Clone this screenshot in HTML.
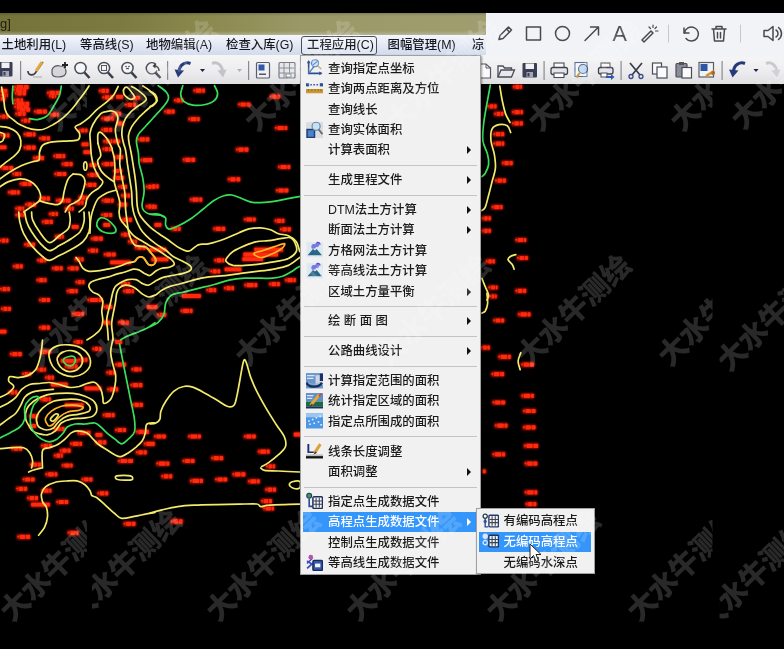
<!DOCTYPE html>
<html><head><meta charset="utf-8">
<style>
html,body{margin:0;padding:0;background:#000;}
body{width:784px;height:649px;position:relative;overflow:hidden;filter:blur(0.6px);font-family:"Liberation Sans","Noto Sans CJK SC",sans-serif;font-size:12px;color:#1a1a1a;}
.abs{position:absolute;}
#title{left:0;top:13px;width:487px;height:22px;background:linear-gradient(90deg,#75733a 0%,#7c7a40 25%,#8b894e 42%,#9a9866 62%,#a09e70 100%);}
#title:after{content:"";position:absolute;left:0;right:0;top:0;height:22px;background:linear-gradient(180deg,rgba(0,0,0,.18) 0,rgba(0,0,0,0) 3px,rgba(0,0,0,0) 18px,rgba(200,205,190,.55) 22px);}
#title span{position:absolute;left:0px;top:3px;font-size:13px;color:#1c1c10;}
#menubar{left:0;top:35px;width:487px;height:20px;background:linear-gradient(180deg,#f4f6fb 0%,#e4eaf5 45%,#d2dbec 100%);}
#menubar span{position:absolute;top:1px;line-height:18px;font-size:12.4px;color:#16161f;white-space:nowrap;font-weight:500;}
#menubar .act{left:301px;top:1px;width:74px;height:17px;border:1px solid #4a4f5c;border-radius:3px;position:absolute;background:rgba(255,255,255,.25);}
#tb1{left:0;top:55px;width:301px;height:29px;background:linear-gradient(180deg,#f6f6f7 0,#ececee 60%,#dfdfe2 100%);}
#tb2{left:481px;top:55px;width:303px;height:29px;background:linear-gradient(180deg,#f6f6f7 0,#ececee 60%,#dfdfe2 100%);}
.vs{position:absolute;top:6px;width:1px;height:18px;background:#8e8e92;}
#anno{left:486px;top:13px;width:298px;height:44px;background:#f2f3f7;}
#anno svg{position:absolute;left:0;top:0;}
#menu{left:300px;top:55px;width:181px;height:520px;background:#f1f1f1;border:1px solid #a0a0a0;box-sizing:border-box;box-shadow:1px 1px 2px rgba(0,0,0,.4);}
.mi{position:absolute;left:2px;right:2px;height:20px;line-height:20px;white-space:nowrap;font-size:12px;color:#1a1a1a;font-weight:500;}
.mi span{position:absolute;left:25px;top:0;font-size:12.4px;}
.mi .ic{position:absolute;left:3px;top:0.5px;width:17px;height:17px;}
.mi.hl{background:#3496fb;color:#fff;}
.mi.hl .arr{border-left-color:#fff;}
.sep{position:absolute;left:3px;right:3px;height:1px;background:#c4c4c4;}
.arr{position:absolute;right:7px;top:6px;width:0;height:0;border-left:4px solid #111;border-top:4px solid transparent;border-bottom:4px solid transparent;}
#sub{left:476px;top:508px;width:119px;height:66px;background:#f1f1f1;border:1px solid #a0a0a0;box-sizing:border-box;box-shadow:1px 1px 2px rgba(0,0,0,.4);}
#sub .mi span{left:24.5px;}
#wm text{font-family:"Liberation Sans","Noto Sans CJK SC",sans-serif;font-weight:900;font-size:29px;text-anchor:middle;dominant-baseline:central;}
</style></head><body>
<svg id="cad" class="abs" style="left:0;top:84px" width="784" height="565" viewBox="0 84 784 565">
<defs><filter id="gl" x="-30%" y="-80%" width="160%" height="260%"><feGaussianBlur stdDeviation="0.8"/></filter><filter id="g2" x="-20%" y="-50%" width="140%" height="200%"><feGaussianBlur stdDeviation="0.55"/></filter><filter id="lb"><feGaussianBlur stdDeviation="0.45"/></filter></defs>
<g fill="#c81200" filter="url(#gl)">
<rect x="192.9" y="88.0" width="12.5" height="5.2" rx="1"/>
<rect x="173.5" y="97.8" width="10.4" height="5.2" rx="1"/>
<rect x="163.7" y="109.1" width="11.5" height="5.2" rx="1"/>
<rect x="187.8" y="116.6" width="12.5" height="5.2" rx="1"/>
<rect x="237.5" y="101.9" width="13.5" height="5.2" rx="1"/>
<rect x="269.2" y="94.1" width="11.5" height="5.2" rx="1"/>
<rect x="274.4" y="125.4" width="13.5" height="5.2" rx="1"/>
<rect x="235.4" y="147.0" width="13.5" height="5.2" rx="1"/>
<rect x="182.2" y="157.2" width="13.5" height="5.2" rx="1"/>
<rect x="277.4" y="164.4" width="13.5" height="5.2" rx="1"/>
<rect x="227.2" y="176.7" width="13.5" height="5.2" rx="1"/>
<rect x="275.4" y="187.9" width="13.5" height="5.2" rx="1"/>
<rect x="189.3" y="197.1" width="13.5" height="5.2" rx="1"/>
<rect x="148.9" y="183.8" width="10.4" height="5.2" rx="1"/>
<rect x="148.9" y="204.3" width="8.4" height="5.2" rx="1"/>
<rect x="147.9" y="157.2" width="4.3" height="5.2" rx="1"/>
<rect x="-1.1" y="238.1" width="10.1" height="5.2" rx="1"/>
<rect x="41.4" y="219.3" width="12.1" height="5.2" rx="1"/>
<rect x="54.3" y="234.1" width="10.1" height="5.2" rx="1"/>
<rect x="23.6" y="242.0" width="12.1" height="5.2" rx="1"/>
<rect x="12.3" y="263.8" width="11.1" height="5.2" rx="1"/>
<rect x="36.5" y="257.8" width="10.1" height="5.2" rx="1"/>
<rect x="51.3" y="265.7" width="12.1" height="5.2" rx="1"/>
<rect x="67.1" y="265.7" width="12.1" height="5.2" rx="1"/>
<rect x="36.0" y="277.6" width="11.1" height="5.2" rx="1"/>
<rect x="-0.6" y="286.5" width="11.1" height="5.2" rx="1"/>
<rect x="75.0" y="279.6" width="10.1" height="5.2" rx="1"/>
<rect x="66.1" y="288.5" width="12.1" height="5.2" rx="1"/>
<rect x="38.5" y="297.4" width="12.1" height="5.2" rx="1"/>
<rect x="0.4" y="306.3" width="11.1" height="5.2" rx="1"/>
<rect x="71.6" y="311.2" width="13.1" height="5.2" rx="1"/>
<rect x="38.5" y="325.1" width="12.1" height="5.2" rx="1"/>
<rect x="-1.1" y="329.0" width="8.1" height="5.2" rx="1"/>
<rect x="86.9" y="297.4" width="16.0" height="5.2" rx="1"/>
<rect x="102.7" y="304.3" width="10.1" height="5.2" rx="1"/>
<rect x="90.3" y="236.1" width="13.1" height="5.2" rx="1"/>
<rect x="87.4" y="248.0" width="11.1" height="5.2" rx="1"/>
<rect x="103.2" y="251.9" width="13.1" height="5.2" rx="1"/>
<rect x="109.6" y="259.8" width="21.9" height="5.2" rx="1"/>
<rect x="102.7" y="222.3" width="8.1" height="5.2" rx="1"/>
<rect x="120.5" y="217.3" width="12.1" height="5.2" rx="1"/>
<rect x="120.5" y="232.1" width="10.1" height="5.2" rx="1"/>
<rect x="127.4" y="239.1" width="10.1" height="5.2" rx="1"/>
<rect x="134.3" y="245.0" width="12.1" height="5.2" rx="1"/>
<rect x="120.5" y="281.6" width="10.1" height="5.2" rx="1"/>
<rect x="122.5" y="288.5" width="12.1" height="5.2" rx="1"/>
<rect x="117.5" y="320.1" width="12.1" height="5.2" rx="1"/>
<rect x="146.2" y="304.3" width="8.1" height="5.2" rx="1"/>
<rect x="102.7" y="320.1" width="8.1" height="5.2" rx="1"/>
<rect x="74.0" y="256.8" width="10.1" height="5.2" rx="1"/>
<rect x="71.1" y="224.2" width="8.1" height="5.2" rx="1"/>
<rect x="14.7" y="212.4" width="10.1" height="5.2" rx="1"/>
<rect x="48.3" y="211.4" width="10.1" height="5.2" rx="1"/>
<rect x="100.7" y="212.4" width="12.1" height="5.2" rx="1"/>
<rect x="243.3" y="216.9" width="13.1" height="5.2" rx="1"/>
<rect x="212.7" y="226.2" width="13.1" height="5.2" rx="1"/>
<rect x="170.2" y="226.2" width="11.1" height="5.2" rx="1"/>
<rect x="153.9" y="222.3" width="8.1" height="5.2" rx="1"/>
<rect x="274.0" y="218.3" width="11.1" height="5.2" rx="1"/>
<rect x="279.4" y="226.8" width="12.1" height="5.2" rx="1"/>
<rect x="213.7" y="257.8" width="11.1" height="5.2" rx="1"/>
<rect x="209.7" y="268.7" width="11.1" height="5.2" rx="1"/>
<rect x="224.0" y="266.7" width="18.0" height="5.2" rx="1"/>
<rect x="284.3" y="277.6" width="12.1" height="5.2" rx="1"/>
<rect x="223.5" y="285.5" width="11.1" height="5.2" rx="1"/>
<rect x="205.8" y="287.5" width="11.1" height="5.2" rx="1"/>
<rect x="243.8" y="282.6" width="14.0" height="5.2" rx="1"/>
<rect x="268.5" y="281.6" width="12.1" height="5.2" rx="1"/>
<rect x="181.5" y="293.4" width="20.0" height="5.2" rx="1"/>
<rect x="180.0" y="308.3" width="13.1" height="5.2" rx="1"/>
<rect x="149.9" y="304.3" width="8.1" height="5.2" rx="1"/>
<rect x="156.8" y="312.2" width="10.1" height="5.2" rx="1"/>
<rect x="148.9" y="247.0" width="18.0" height="5.2" rx="1"/>
<rect x="150.9" y="256.8" width="18.0" height="5.2" rx="1"/>
<rect x="153.4" y="433.9" width="13.1" height="5.2" rx="1"/>
<rect x="187.5" y="433.9" width="14.0" height="5.2" rx="1"/>
<rect x="243.3" y="433.9" width="13.1" height="5.2" rx="1"/>
<rect x="293.2" y="431.9" width="8.1" height="5.2" rx="1"/>
<rect x="257.2" y="449.1" width="13.1" height="5.2" rx="1"/>
<rect x="210.7" y="455.6" width="13.1" height="5.2" rx="1"/>
<rect x="182.0" y="458.4" width="13.1" height="5.2" rx="1"/>
<rect x="155.8" y="461.0" width="14.0" height="5.2" rx="1"/>
<rect x="148.9" y="441.2" width="6.1" height="5.2" rx="1"/>
<rect x="22.1" y="476.9" width="13.1" height="5.2" rx="1"/>
<rect x="44.9" y="471.7" width="13.1" height="5.2" rx="1"/>
<rect x="81.0" y="476.9" width="12.1" height="5.2" rx="1"/>
<rect x="15.7" y="486.2" width="12.1" height="5.2" rx="1"/>
<rect x="40.9" y="488.1" width="11.1" height="5.2" rx="1"/>
<rect x="96.8" y="490.7" width="12.1" height="5.2" rx="1"/>
<rect x="26.6" y="495.5" width="12.1" height="5.2" rx="1"/>
<rect x="30.5" y="502.0" width="20.0" height="5.2" rx="1"/>
<rect x="55.8" y="499.4" width="13.1" height="5.2" rx="1"/>
<rect x="123.0" y="521.2" width="13.1" height="5.2" rx="1"/>
<rect x="67.1" y="530.2" width="12.1" height="5.2" rx="1"/>
<rect x="16.7" y="534.2" width="14.0" height="5.2" rx="1"/>
<rect x="160.8" y="473.7" width="12.1" height="5.2" rx="1"/>
<rect x="189.4" y="478.3" width="14.0" height="5.2" rx="1"/>
<rect x="214.6" y="476.9" width="13.1" height="5.2" rx="1"/>
<rect x="231.9" y="471.7" width="14.0" height="5.2" rx="1"/>
<rect x="247.3" y="478.8" width="13.1" height="5.2" rx="1"/>
<rect x="264.6" y="487.1" width="12.1" height="5.2" rx="1"/>
<rect x="260.6" y="498.6" width="12.1" height="5.2" rx="1"/>
<rect x="262.6" y="505.9" width="12.1" height="5.2" rx="1"/>
<rect x="170.2" y="518.8" width="13.1" height="5.2" rx="1"/>
<rect x="265.6" y="463.8" width="10.1" height="5.2" rx="1"/>
<rect x="512.3" y="84.2" width="10.4" height="5.2" rx="1"/>
<rect x="486.8" y="103.8" width="10.4" height="5.2" rx="1"/>
<rect x="493.6" y="111.3" width="10.4" height="5.2" rx="1"/>
<rect x="511.4" y="109.6" width="12.1" height="5.2" rx="1"/>
<rect x="511.4" y="120.8" width="12.1" height="5.2" rx="1"/>
<rect x="492.8" y="131.6" width="12.1" height="5.2" rx="1"/>
<rect x="492.8" y="141.1" width="12.1" height="5.2" rx="1"/>
<rect x="501.3" y="160.5" width="12.1" height="5.2" rx="1"/>
<rect x="494.5" y="178.1" width="12.1" height="5.2" rx="1"/>
<rect x="491.1" y="204.5" width="12.1" height="5.2" rx="1"/>
<rect x="481.1" y="215.7" width="10.4" height="5.2" rx="1"/>
<rect x="481.1" y="228.2" width="10.4" height="5.2" rx="1"/>
<rect x="514.8" y="237.4" width="12.1" height="5.2" rx="1"/>
<rect x="516.5" y="255.4" width="12.1" height="5.2" rx="1"/>
<rect x="485.2" y="258.8" width="10.4" height="5.2" rx="1"/>
<rect x="487.9" y="284.9" width="10.4" height="5.2" rx="1"/>
<rect x="514.8" y="288.2" width="12.1" height="5.2" rx="1"/>
<rect x="488.7" y="293.7" width="8.7" height="5.2" rx="1"/>
<rect x="517.4" y="311.8" width="13.8" height="5.2" rx="1"/>
<rect x="492.8" y="317.9" width="12.1" height="5.2" rx="1"/>
<rect x="480.1" y="345.0" width="10.4" height="5.2" rx="1"/>
<rect x="497.7" y="354.2" width="13.8" height="5.2" rx="1"/>
<rect x="520.7" y="362.0" width="13.8" height="5.2" rx="1"/>
<rect x="490.9" y="371.5" width="13.8" height="5.2" rx="1"/>
<rect x="520.7" y="393.2" width="13.8" height="5.2" rx="1"/>
<rect x="491.9" y="399.9" width="13.8" height="5.2" rx="1"/>
<rect x="522.4" y="408.4" width="13.8" height="5.2" rx="1"/>
<rect x="494.3" y="423.0" width="13.8" height="5.2" rx="1"/>
<rect x="522.4" y="424.7" width="13.8" height="5.2" rx="1"/>
<rect x="523.3" y="443.3" width="15.5" height="5.2" rx="1"/>
<rect x="491.9" y="451.8" width="13.8" height="5.2" rx="1"/>
<rect x="524.1" y="461.0" width="13.8" height="5.2" rx="1"/>
<rect x="482.1" y="468.8" width="4.3" height="5.2" rx="1"/>
<rect x="524.1" y="489.8" width="13.8" height="5.2" rx="1"/>
<rect x="525.0" y="501.6" width="12.1" height="5.2" rx="1"/>
<rect x="-0.1" y="88.3" width="8.1" height="5.2" rx="1"/>
<rect x="12.8" y="87.3" width="14.0" height="5.2" rx="1"/>
<rect x="46.4" y="90.3" width="14.0" height="5.2" rx="1"/>
<rect x="-0.1" y="96.2" width="6.1" height="5.2" rx="1"/>
<rect x="13.7" y="101.2" width="16.0" height="5.2" rx="1"/>
<rect x="16.7" y="107.1" width="14.0" height="5.2" rx="1"/>
<rect x="33.5" y="109.1" width="14.0" height="5.2" rx="1"/>
<rect x="49.3" y="112.0" width="10.1" height="5.2" rx="1"/>
<rect x="-1.1" y="114.0" width="10.1" height="5.2" rx="1"/>
<rect x="20.7" y="118.0" width="10.1" height="5.2" rx="1"/>
<rect x="23.1" y="131.8" width="13.1" height="5.2" rx="1"/>
<rect x="38.5" y="135.8" width="12.1" height="5.2" rx="1"/>
<rect x="-0.1" y="132.8" width="10.1" height="5.2" rx="1"/>
<rect x="-1.1" y="144.7" width="8.1" height="5.2" rx="1"/>
<rect x="23.1" y="145.1" width="13.1" height="5.2" rx="1"/>
<rect x="32.5" y="155.5" width="12.1" height="5.2" rx="1"/>
<rect x="52.8" y="153.6" width="13.1" height="5.2" rx="1"/>
<rect x="61.2" y="161.5" width="12.1" height="5.2" rx="1"/>
<rect x="-0.1" y="165.4" width="14.0" height="5.2" rx="1"/>
<rect x="11.8" y="171.4" width="10.1" height="5.2" rx="1"/>
<rect x="53.8" y="171.4" width="13.1" height="5.2" rx="1"/>
<rect x="19.2" y="181.2" width="13.1" height="5.2" rx="1"/>
<rect x="7.3" y="189.7" width="13.1" height="5.2" rx="1"/>
<rect x="38.5" y="196.1" width="12.1" height="5.2" rx="1"/>
<rect x="24.6" y="202.0" width="12.1" height="5.2" rx="1"/>
<rect x="14.7" y="206.0" width="10.1" height="5.2" rx="1"/>
<rect x="78.0" y="127.9" width="10.1" height="5.2" rx="1"/>
<rect x="81.0" y="141.7" width="8.1" height="5.2" rx="1"/>
<rect x="82.9" y="149.6" width="8.1" height="5.2" rx="1"/>
<rect x="98.3" y="88.3" width="11.1" height="5.2" rx="1"/>
<rect x="101.7" y="94.8" width="12.1" height="5.2" rx="1"/>
<rect x="115.6" y="94.3" width="8.1" height="5.2" rx="1"/>
<rect x="124.5" y="102.2" width="12.1" height="5.2" rx="1"/>
<rect x="132.4" y="95.2" width="8.1" height="5.2" rx="1"/>
<rect x="100.7" y="116.0" width="14.0" height="5.2" rx="1"/>
<rect x="100.7" y="127.3" width="12.1" height="5.2" rx="1"/>
<rect x="136.8" y="136.8" width="13.1" height="5.2" rx="1"/>
<rect x="139.8" y="157.5" width="13.1" height="5.2" rx="1"/>
<rect x="145.2" y="184.2" width="10.1" height="5.2" rx="1"/>
<rect x="145.2" y="204.0" width="10.1" height="5.2" rx="1"/>
<rect x="102.7" y="138.7" width="10.1" height="5.2" rx="1"/>
<rect x="101.7" y="146.6" width="10.1" height="5.2" rx="1"/>
<rect x="101.2" y="161.5" width="13.1" height="5.2" rx="1"/>
<rect x="88.9" y="162.5" width="8.1" height="5.2" rx="1"/>
<rect x="112.6" y="168.4" width="10.1" height="5.2" rx="1"/>
<rect x="86.9" y="172.3" width="12.1" height="5.2" rx="1"/>
<rect x="112.6" y="175.3" width="12.1" height="5.2" rx="1"/>
<rect x="84.9" y="182.2" width="12.1" height="5.2" rx="1"/>
<rect x="117.5" y="184.2" width="10.1" height="5.2" rx="1"/>
<rect x="101.2" y="198.0" width="13.1" height="5.2" rx="1"/>
<rect x="120.5" y="193.1" width="10.1" height="5.2" rx="1"/>
<rect x="117.5" y="202.0" width="10.1" height="5.2" rx="1"/>
<rect x="78.0" y="195.1" width="10.1" height="5.2" rx="1"/>
<rect x="55.3" y="198.0" width="16.0" height="5.2" rx="1"/>
<rect x="74.0" y="200.0" width="10.1" height="5.2" rx="1"/>
<rect x="64.2" y="206.0" width="10.1" height="5.2" rx="1"/>
<rect x="111.6" y="111.1" width="10.1" height="5.2" rx="1"/>
<rect x="116.5" y="120.9" width="8.1" height="5.2" rx="1"/>
<rect x="112.6" y="138.7" width="8.1" height="5.2" rx="1"/>
<rect x="113.6" y="154.6" width="10.1" height="5.2" rx="1"/>
<rect x="9.3" y="351.6" width="13.1" height="5.2" rx="1"/>
<rect x="73.1" y="339.4" width="10.1" height="5.2" rx="1"/>
<rect x="91.8" y="346.3" width="10.1" height="5.2" rx="1"/>
<rect x="114.6" y="362.1" width="12.1" height="5.2" rx="1"/>
<rect x="130.9" y="366.7" width="11.1" height="5.2" rx="1"/>
<rect x="129.9" y="382.5" width="13.1" height="5.2" rx="1"/>
<rect x="131.4" y="402.2" width="12.1" height="5.2" rx="1"/>
<rect x="102.2" y="412.5" width="13.1" height="5.2" rx="1"/>
<rect x="21.6" y="371.4" width="10.1" height="5.2" rx="1"/>
<rect x="7.8" y="389.8" width="10.1" height="5.2" rx="1"/>
<rect x="39.4" y="396.7" width="12.1" height="5.2" rx="1"/>
<rect x="50.3" y="381.9" width="18.0" height="5.2" rx="1"/>
<rect x="83.9" y="385.8" width="18.0" height="5.2" rx="1"/>
<rect x="106.7" y="386.8" width="12.1" height="5.2" rx="1"/>
<rect x="64.2" y="402.6" width="20.0" height="5.2" rx="1"/>
<rect x="28.6" y="413.5" width="10.1" height="5.2" rx="1"/>
<rect x="28.6" y="423.4" width="8.1" height="5.2" rx="1"/>
<rect x="53.3" y="426.4" width="12.1" height="5.2" rx="1"/>
<rect x="77.0" y="430.3" width="14.0" height="5.2" rx="1"/>
<rect x="94.8" y="432.3" width="8.1" height="5.2" rx="1"/>
<rect x="114.6" y="427.4" width="12.1" height="5.2" rx="1"/>
<rect x="135.3" y="429.3" width="14.0" height="5.2" rx="1"/>
<rect x="69.6" y="441.2" width="13.1" height="5.2" rx="1"/>
<rect x="40.4" y="443.2" width="12.1" height="5.2" rx="1"/>
<rect x="94.8" y="439.8" width="12.1" height="5.2" rx="1"/>
<rect x="143.2" y="441.2" width="12.1" height="5.2" rx="1"/>
<rect x="10.8" y="446.1" width="12.1" height="5.2" rx="1"/>
<rect x="59.2" y="448.1" width="12.1" height="5.2" rx="1"/>
<rect x="53.3" y="453.1" width="10.1" height="5.2" rx="1"/>
<rect x="135.3" y="449.7" width="12.1" height="5.2" rx="1"/>
<rect x="29.6" y="462.0" width="12.1" height="5.2" rx="1"/>
<rect x="61.2" y="462.9" width="12.1" height="5.2" rx="1"/>
<rect x="117.5" y="458.4" width="16.0" height="5.2" rx="1"/>
<rect x="39.4" y="349.3" width="12.1" height="5.2" rx="1"/>
<rect x="36.5" y="367.1" width="10.1" height="5.2" rx="1"/>
<rect x="44.4" y="375.0" width="10.1" height="5.2" rx="1"/>
<rect x="60.2" y="358.2" width="18.0" height="5.2" rx="1"/>
<rect x="64.2" y="364.1" width="14.0" height="5.2" rx="1"/>
<rect x="78.0" y="357.2" width="10.1" height="5.2" rx="1"/>
<rect x="105.7" y="370.0" width="10.1" height="5.2" rx="1"/>
<rect x="114.6" y="339.4" width="8.1" height="5.2" rx="1"/>
<rect x="13.7" y="84.5" width="15.5" height="5.2" rx="1"/>
<rect x="14.2" y="90.8" width="12.4" height="5.2" rx="1"/>
<rect x="-0.1" y="92.6" width="8.4" height="5.2" rx="1"/>
<rect x="13.7" y="104.4" width="15.5" height="5.2" rx="1"/>
<rect x="14.7" y="111.2" width="11.4" height="5.2" rx="1"/>
<rect x="48.4" y="93.6" width="8.4" height="5.2" rx="1"/>
<rect x="13.2" y="97.7" width="10.4" height="5.2" rx="1"/>
<rect x="242.8" y="251.9" width="35.8" height="5.2" rx="1"/>
<rect x="253.7" y="247.0" width="29.9" height="5.2" rx="1"/>
<rect x="241.8" y="256.5" width="21.9" height="5.2" rx="1"/>
</g>
<g fill="#ff2a10" filter="url(#g2)">
<rect x="193.5" y="89.6" width="1.6" height="1.6"/>
<rect x="196.1" y="88.5" width="5.3" height="4.2" rx="0.8"/>
<rect x="202.4" y="88.5" width="2.5" height="4.2" rx="0.8"/>
<rect x="174.1" y="99.4" width="1.6" height="1.6"/>
<rect x="176.7" y="98.3" width="3.3" height="4.2" rx="0.8"/>
<rect x="180.9" y="98.3" width="2.4" height="4.2" rx="0.8"/>
<rect x="164.3" y="110.7" width="1.6" height="1.6"/>
<rect x="166.9" y="109.6" width="3.9" height="4.2" rx="0.8"/>
<rect x="171.7" y="109.6" width="2.9" height="4.2" rx="0.8"/>
<rect x="188.4" y="118.2" width="1.6" height="1.6"/>
<rect x="191.0" y="117.1" width="5.3" height="4.2" rx="0.8"/>
<rect x="197.2" y="117.1" width="2.5" height="4.2" rx="0.8"/>
<rect x="238.1" y="103.5" width="1.6" height="1.6"/>
<rect x="240.7" y="102.4" width="5.0" height="4.2" rx="0.8"/>
<rect x="246.6" y="102.4" width="3.8" height="4.2" rx="0.8"/>
<rect x="269.8" y="95.7" width="1.6" height="1.6"/>
<rect x="272.4" y="94.6" width="3.9" height="4.2" rx="0.8"/>
<rect x="277.2" y="94.6" width="2.9" height="4.2" rx="0.8"/>
<rect x="275.0" y="127.0" width="1.6" height="1.6"/>
<rect x="277.6" y="125.9" width="6.0" height="4.2" rx="0.8"/>
<rect x="284.5" y="125.9" width="2.8" height="4.2" rx="0.8"/>
<rect x="236.0" y="148.6" width="1.6" height="1.6"/>
<rect x="238.6" y="147.5" width="5.0" height="4.2" rx="0.8"/>
<rect x="244.6" y="147.5" width="3.8" height="4.2" rx="0.8"/>
<rect x="182.8" y="158.8" width="1.6" height="1.6"/>
<rect x="185.4" y="157.7" width="5.0" height="4.2" rx="0.8"/>
<rect x="191.3" y="157.7" width="3.8" height="4.2" rx="0.8"/>
<rect x="278.0" y="166.0" width="1.6" height="1.6"/>
<rect x="280.6" y="164.9" width="6.0" height="4.2" rx="0.8"/>
<rect x="287.5" y="164.9" width="2.8" height="4.2" rx="0.8"/>
<rect x="227.8" y="178.3" width="1.6" height="1.6"/>
<rect x="230.4" y="177.2" width="5.0" height="4.2" rx="0.8"/>
<rect x="236.4" y="177.2" width="3.8" height="4.2" rx="0.8"/>
<rect x="276.0" y="189.5" width="1.6" height="1.6"/>
<rect x="278.6" y="188.4" width="5.0" height="4.2" rx="0.8"/>
<rect x="284.5" y="188.4" width="3.8" height="4.2" rx="0.8"/>
<rect x="189.9" y="198.7" width="1.6" height="1.6"/>
<rect x="192.5" y="197.6" width="6.0" height="4.2" rx="0.8"/>
<rect x="199.4" y="197.6" width="2.8" height="4.2" rx="0.8"/>
<rect x="149.5" y="185.4" width="1.6" height="1.6"/>
<rect x="152.1" y="184.3" width="3.3" height="4.2" rx="0.8"/>
<rect x="156.3" y="184.3" width="2.4" height="4.2" rx="0.8"/>
<rect x="149.5" y="205.9" width="1.6" height="1.6"/>
<rect x="152.1" y="204.8" width="2.2" height="4.2" rx="0.8"/>
<rect x="155.1" y="204.8" width="1.5" height="4.2" rx="0.8"/>
<rect x="148.5" y="157.9" width="3.1" height="3.8" rx="1"/>
<rect x="-0.5" y="239.7" width="1.6" height="1.6"/>
<rect x="2.1" y="238.6" width="3.1" height="4.2" rx="0.8"/>
<rect x="6.1" y="238.6" width="2.3" height="4.2" rx="0.8"/>
<rect x="42.0" y="220.9" width="1.6" height="1.6"/>
<rect x="44.6" y="219.8" width="4.2" height="4.2" rx="0.8"/>
<rect x="49.7" y="219.8" width="3.1" height="4.2" rx="0.8"/>
<rect x="54.9" y="235.7" width="1.6" height="1.6"/>
<rect x="57.5" y="234.6" width="3.7" height="4.2" rx="0.8"/>
<rect x="62.1" y="234.6" width="1.6" height="4.2" rx="0.8"/>
<rect x="24.2" y="243.6" width="1.6" height="1.6"/>
<rect x="26.8" y="242.5" width="4.2" height="4.2" rx="0.8"/>
<rect x="32.0" y="242.5" width="3.1" height="4.2" rx="0.8"/>
<rect x="12.9" y="265.4" width="1.6" height="1.6"/>
<rect x="15.5" y="264.3" width="3.7" height="4.2" rx="0.8"/>
<rect x="20.0" y="264.3" width="2.7" height="4.2" rx="0.8"/>
<rect x="37.1" y="259.4" width="1.6" height="1.6"/>
<rect x="39.7" y="258.3" width="3.7" height="4.2" rx="0.8"/>
<rect x="44.3" y="258.3" width="1.6" height="4.2" rx="0.8"/>
<rect x="51.9" y="267.3" width="1.6" height="1.6"/>
<rect x="54.5" y="266.2" width="4.2" height="4.2" rx="0.8"/>
<rect x="59.6" y="266.2" width="3.1" height="4.2" rx="0.8"/>
<rect x="67.7" y="267.3" width="1.6" height="1.6"/>
<rect x="70.3" y="266.2" width="4.2" height="4.2" rx="0.8"/>
<rect x="75.4" y="266.2" width="3.1" height="4.2" rx="0.8"/>
<rect x="36.6" y="279.2" width="1.6" height="1.6"/>
<rect x="39.2" y="278.1" width="4.4" height="4.2" rx="0.8"/>
<rect x="44.5" y="278.1" width="2.0" height="4.2" rx="0.8"/>
<rect x="0.0" y="288.1" width="1.6" height="1.6"/>
<rect x="2.6" y="287.0" width="3.7" height="4.2" rx="0.8"/>
<rect x="7.2" y="287.0" width="2.7" height="4.2" rx="0.8"/>
<rect x="75.6" y="281.2" width="1.6" height="1.6"/>
<rect x="78.2" y="280.1" width="3.1" height="4.2" rx="0.8"/>
<rect x="82.2" y="280.1" width="2.3" height="4.2" rx="0.8"/>
<rect x="66.7" y="290.1" width="1.6" height="1.6"/>
<rect x="69.3" y="289.0" width="5.1" height="4.2" rx="0.8"/>
<rect x="75.3" y="289.0" width="2.3" height="4.2" rx="0.8"/>
<rect x="39.1" y="299.0" width="1.6" height="1.6"/>
<rect x="41.7" y="297.9" width="4.2" height="4.2" rx="0.8"/>
<rect x="46.8" y="297.9" width="3.1" height="4.2" rx="0.8"/>
<rect x="1.0" y="307.9" width="1.6" height="1.6"/>
<rect x="3.6" y="306.8" width="3.7" height="4.2" rx="0.8"/>
<rect x="8.2" y="306.8" width="2.7" height="4.2" rx="0.8"/>
<rect x="72.2" y="312.8" width="1.6" height="1.6"/>
<rect x="74.8" y="311.7" width="5.7" height="4.2" rx="0.8"/>
<rect x="81.4" y="311.7" width="2.6" height="4.2" rx="0.8"/>
<rect x="39.1" y="326.7" width="1.6" height="1.6"/>
<rect x="41.7" y="325.6" width="4.2" height="4.2" rx="0.8"/>
<rect x="46.8" y="325.6" width="3.1" height="4.2" rx="0.8"/>
<rect x="-0.5" y="329.7" width="6.9" height="3.8" rx="1"/>
<rect x="87.5" y="299.0" width="1.6" height="1.6"/>
<rect x="90.1" y="297.9" width="7.7" height="4.2" rx="0.8"/>
<rect x="98.7" y="297.9" width="3.7" height="4.2" rx="0.8"/>
<rect x="103.3" y="305.9" width="1.6" height="1.6"/>
<rect x="105.9" y="304.8" width="3.1" height="4.2" rx="0.8"/>
<rect x="109.9" y="304.8" width="2.3" height="4.2" rx="0.8"/>
<rect x="90.9" y="237.7" width="1.6" height="1.6"/>
<rect x="93.5" y="236.6" width="4.8" height="4.2" rx="0.8"/>
<rect x="99.2" y="236.6" width="3.6" height="4.2" rx="0.8"/>
<rect x="88.0" y="249.6" width="1.6" height="1.6"/>
<rect x="90.6" y="248.5" width="4.4" height="4.2" rx="0.8"/>
<rect x="95.9" y="248.5" width="2.0" height="4.2" rx="0.8"/>
<rect x="103.8" y="253.5" width="1.6" height="1.6"/>
<rect x="106.4" y="252.4" width="4.8" height="4.2" rx="0.8"/>
<rect x="112.1" y="252.4" width="3.6" height="4.2" rx="0.8"/>
<rect x="110.2" y="260.5" width="20.7" height="3.8" rx="1"/>
<rect x="103.3" y="223.0" width="6.9" height="3.8" rx="1"/>
<rect x="121.1" y="218.9" width="1.6" height="1.6"/>
<rect x="123.7" y="217.8" width="4.2" height="4.2" rx="0.8"/>
<rect x="128.8" y="217.8" width="3.1" height="4.2" rx="0.8"/>
<rect x="121.1" y="233.7" width="1.6" height="1.6"/>
<rect x="123.7" y="232.6" width="3.1" height="4.2" rx="0.8"/>
<rect x="127.7" y="232.6" width="2.3" height="4.2" rx="0.8"/>
<rect x="128.0" y="240.7" width="1.6" height="1.6"/>
<rect x="130.6" y="239.6" width="3.7" height="4.2" rx="0.8"/>
<rect x="135.3" y="239.6" width="1.6" height="4.2" rx="0.8"/>
<rect x="134.9" y="246.6" width="1.6" height="1.6"/>
<rect x="137.5" y="245.5" width="4.2" height="4.2" rx="0.8"/>
<rect x="142.7" y="245.5" width="3.1" height="4.2" rx="0.8"/>
<rect x="121.1" y="283.2" width="1.6" height="1.6"/>
<rect x="123.7" y="282.1" width="3.1" height="4.2" rx="0.8"/>
<rect x="127.7" y="282.1" width="2.3" height="4.2" rx="0.8"/>
<rect x="123.1" y="290.1" width="1.6" height="1.6"/>
<rect x="125.7" y="289.0" width="5.1" height="4.2" rx="0.8"/>
<rect x="131.6" y="289.0" width="2.3" height="4.2" rx="0.8"/>
<rect x="118.1" y="321.7" width="1.6" height="1.6"/>
<rect x="120.7" y="320.6" width="4.2" height="4.2" rx="0.8"/>
<rect x="125.9" y="320.6" width="3.1" height="4.2" rx="0.8"/>
<rect x="146.8" y="305.0" width="6.9" height="3.8" rx="1"/>
<rect x="103.3" y="320.8" width="6.9" height="3.8" rx="1"/>
<rect x="74.6" y="258.4" width="1.6" height="1.6"/>
<rect x="77.2" y="257.3" width="3.1" height="4.2" rx="0.8"/>
<rect x="81.3" y="257.3" width="2.3" height="4.2" rx="0.8"/>
<rect x="71.7" y="224.9" width="6.9" height="3.8" rx="1"/>
<rect x="15.3" y="214.0" width="1.6" height="1.6"/>
<rect x="17.9" y="212.9" width="3.7" height="4.2" rx="0.8"/>
<rect x="22.6" y="212.9" width="1.6" height="4.2" rx="0.8"/>
<rect x="48.9" y="213.0" width="1.6" height="1.6"/>
<rect x="51.5" y="211.9" width="3.1" height="4.2" rx="0.8"/>
<rect x="55.6" y="211.9" width="2.3" height="4.2" rx="0.8"/>
<rect x="101.3" y="214.0" width="1.6" height="1.6"/>
<rect x="103.9" y="212.9" width="4.2" height="4.2" rx="0.8"/>
<rect x="109.1" y="212.9" width="3.1" height="4.2" rx="0.8"/>
<rect x="243.9" y="218.5" width="1.6" height="1.6"/>
<rect x="246.5" y="217.4" width="5.7" height="4.2" rx="0.8"/>
<rect x="253.1" y="217.4" width="2.6" height="4.2" rx="0.8"/>
<rect x="213.3" y="227.8" width="1.6" height="1.6"/>
<rect x="215.9" y="226.7" width="4.8" height="4.2" rx="0.8"/>
<rect x="221.6" y="226.7" width="3.6" height="4.2" rx="0.8"/>
<rect x="170.8" y="227.8" width="1.6" height="1.6"/>
<rect x="173.4" y="226.7" width="3.7" height="4.2" rx="0.8"/>
<rect x="177.9" y="226.7" width="2.7" height="4.2" rx="0.8"/>
<rect x="154.5" y="223.0" width="6.9" height="3.8" rx="1"/>
<rect x="274.6" y="219.9" width="1.6" height="1.6"/>
<rect x="277.2" y="218.8" width="3.7" height="4.2" rx="0.8"/>
<rect x="281.7" y="218.8" width="2.7" height="4.2" rx="0.8"/>
<rect x="280.0" y="228.4" width="1.6" height="1.6"/>
<rect x="282.6" y="227.3" width="4.2" height="4.2" rx="0.8"/>
<rect x="287.7" y="227.3" width="3.1" height="4.2" rx="0.8"/>
<rect x="214.3" y="259.4" width="1.6" height="1.6"/>
<rect x="216.9" y="258.3" width="4.4" height="4.2" rx="0.8"/>
<rect x="222.2" y="258.3" width="2.0" height="4.2" rx="0.8"/>
<rect x="210.3" y="270.3" width="1.6" height="1.6"/>
<rect x="212.9" y="269.2" width="3.7" height="4.2" rx="0.8"/>
<rect x="217.5" y="269.2" width="2.7" height="4.2" rx="0.8"/>
<rect x="224.6" y="267.4" width="16.8" height="3.8" rx="1"/>
<rect x="284.9" y="279.2" width="1.6" height="1.6"/>
<rect x="287.5" y="278.1" width="5.1" height="4.2" rx="0.8"/>
<rect x="293.5" y="278.1" width="2.3" height="4.2" rx="0.8"/>
<rect x="224.1" y="287.1" width="1.6" height="1.6"/>
<rect x="226.7" y="286.0" width="3.7" height="4.2" rx="0.8"/>
<rect x="231.3" y="286.0" width="2.7" height="4.2" rx="0.8"/>
<rect x="206.4" y="289.1" width="1.6" height="1.6"/>
<rect x="209.0" y="288.0" width="3.7" height="4.2" rx="0.8"/>
<rect x="213.5" y="288.0" width="2.7" height="4.2" rx="0.8"/>
<rect x="244.4" y="284.2" width="1.6" height="1.6"/>
<rect x="247.0" y="283.1" width="6.4" height="4.2" rx="0.8"/>
<rect x="254.3" y="283.1" width="3.0" height="4.2" rx="0.8"/>
<rect x="269.1" y="283.2" width="1.6" height="1.6"/>
<rect x="271.7" y="282.1" width="4.2" height="4.2" rx="0.8"/>
<rect x="276.8" y="282.1" width="3.1" height="4.2" rx="0.8"/>
<rect x="182.1" y="294.1" width="18.8" height="3.8" rx="1"/>
<rect x="180.6" y="309.9" width="1.6" height="1.6"/>
<rect x="183.2" y="308.8" width="5.7" height="4.2" rx="0.8"/>
<rect x="189.9" y="308.8" width="2.6" height="4.2" rx="0.8"/>
<rect x="150.5" y="305.0" width="6.9" height="3.8" rx="1"/>
<rect x="157.4" y="313.8" width="1.6" height="1.6"/>
<rect x="160.0" y="312.7" width="3.1" height="4.2" rx="0.8"/>
<rect x="164.0" y="312.7" width="2.3" height="4.2" rx="0.8"/>
<rect x="149.5" y="247.7" width="16.8" height="3.8" rx="1"/>
<rect x="151.5" y="257.5" width="16.8" height="3.8" rx="1"/>
<rect x="154.0" y="435.5" width="1.6" height="1.6"/>
<rect x="156.6" y="434.4" width="4.8" height="4.2" rx="0.8"/>
<rect x="162.2" y="434.4" width="3.6" height="4.2" rx="0.8"/>
<rect x="188.1" y="435.5" width="1.6" height="1.6"/>
<rect x="190.7" y="434.4" width="6.4" height="4.2" rx="0.8"/>
<rect x="197.9" y="434.4" width="3.0" height="4.2" rx="0.8"/>
<rect x="243.9" y="435.5" width="1.6" height="1.6"/>
<rect x="246.5" y="434.4" width="4.8" height="4.2" rx="0.8"/>
<rect x="252.2" y="434.4" width="3.6" height="4.2" rx="0.8"/>
<rect x="293.8" y="432.6" width="6.9" height="3.8" rx="1"/>
<rect x="257.8" y="450.7" width="1.6" height="1.6"/>
<rect x="260.4" y="449.6" width="5.7" height="4.2" rx="0.8"/>
<rect x="267.0" y="449.6" width="2.6" height="4.2" rx="0.8"/>
<rect x="211.3" y="457.2" width="1.6" height="1.6"/>
<rect x="213.9" y="456.1" width="4.8" height="4.2" rx="0.8"/>
<rect x="219.6" y="456.1" width="3.6" height="4.2" rx="0.8"/>
<rect x="182.6" y="460.0" width="1.6" height="1.6"/>
<rect x="185.2" y="458.9" width="4.8" height="4.2" rx="0.8"/>
<rect x="190.9" y="458.9" width="3.6" height="4.2" rx="0.8"/>
<rect x="156.4" y="462.6" width="1.6" height="1.6"/>
<rect x="159.0" y="461.5" width="6.4" height="4.2" rx="0.8"/>
<rect x="166.3" y="461.5" width="3.0" height="4.2" rx="0.8"/>
<rect x="149.5" y="441.9" width="4.9" height="3.8" rx="1"/>
<rect x="22.7" y="478.5" width="1.6" height="1.6"/>
<rect x="25.3" y="477.4" width="4.8" height="4.2" rx="0.8"/>
<rect x="31.0" y="477.4" width="3.6" height="4.2" rx="0.8"/>
<rect x="45.5" y="473.3" width="1.6" height="1.6"/>
<rect x="48.1" y="472.2" width="5.7" height="4.2" rx="0.8"/>
<rect x="54.7" y="472.2" width="2.6" height="4.2" rx="0.8"/>
<rect x="81.6" y="478.5" width="1.6" height="1.6"/>
<rect x="84.2" y="477.4" width="4.2" height="4.2" rx="0.8"/>
<rect x="89.3" y="477.4" width="3.1" height="4.2" rx="0.8"/>
<rect x="16.3" y="487.8" width="1.6" height="1.6"/>
<rect x="18.9" y="486.7" width="4.2" height="4.2" rx="0.8"/>
<rect x="24.0" y="486.7" width="3.1" height="4.2" rx="0.8"/>
<rect x="41.5" y="489.7" width="1.6" height="1.6"/>
<rect x="44.1" y="488.6" width="4.4" height="4.2" rx="0.8"/>
<rect x="49.4" y="488.6" width="2.0" height="4.2" rx="0.8"/>
<rect x="97.4" y="492.3" width="1.6" height="1.6"/>
<rect x="100.0" y="491.2" width="4.2" height="4.2" rx="0.8"/>
<rect x="105.1" y="491.2" width="3.1" height="4.2" rx="0.8"/>
<rect x="27.2" y="497.1" width="1.6" height="1.6"/>
<rect x="29.8" y="496.0" width="4.2" height="4.2" rx="0.8"/>
<rect x="34.9" y="496.0" width="3.1" height="4.2" rx="0.8"/>
<rect x="31.1" y="502.7" width="18.8" height="3.8" rx="1"/>
<rect x="56.4" y="501.0" width="1.6" height="1.6"/>
<rect x="59.0" y="499.9" width="4.8" height="4.2" rx="0.8"/>
<rect x="64.6" y="499.9" width="3.6" height="4.2" rx="0.8"/>
<rect x="123.6" y="522.8" width="1.6" height="1.6"/>
<rect x="126.2" y="521.7" width="4.8" height="4.2" rx="0.8"/>
<rect x="131.9" y="521.7" width="3.6" height="4.2" rx="0.8"/>
<rect x="67.7" y="531.8" width="1.6" height="1.6"/>
<rect x="70.3" y="530.7" width="5.1" height="4.2" rx="0.8"/>
<rect x="76.3" y="530.7" width="2.3" height="4.2" rx="0.8"/>
<rect x="17.3" y="535.8" width="1.6" height="1.6"/>
<rect x="19.9" y="534.7" width="5.3" height="4.2" rx="0.8"/>
<rect x="26.1" y="534.7" width="4.0" height="4.2" rx="0.8"/>
<rect x="161.4" y="475.3" width="1.6" height="1.6"/>
<rect x="164.0" y="474.2" width="4.2" height="4.2" rx="0.8"/>
<rect x="169.1" y="474.2" width="3.1" height="4.2" rx="0.8"/>
<rect x="190.0" y="479.9" width="1.6" height="1.6"/>
<rect x="192.6" y="478.8" width="6.4" height="4.2" rx="0.8"/>
<rect x="199.9" y="478.8" width="3.0" height="4.2" rx="0.8"/>
<rect x="215.2" y="478.5" width="1.6" height="1.6"/>
<rect x="217.8" y="477.4" width="4.8" height="4.2" rx="0.8"/>
<rect x="223.5" y="477.4" width="3.6" height="4.2" rx="0.8"/>
<rect x="232.5" y="473.3" width="1.6" height="1.6"/>
<rect x="235.1" y="472.2" width="5.3" height="4.2" rx="0.8"/>
<rect x="241.4" y="472.2" width="4.0" height="4.2" rx="0.8"/>
<rect x="247.9" y="480.4" width="1.6" height="1.6"/>
<rect x="250.5" y="479.3" width="5.7" height="4.2" rx="0.8"/>
<rect x="257.1" y="479.3" width="2.6" height="4.2" rx="0.8"/>
<rect x="265.2" y="488.7" width="1.6" height="1.6"/>
<rect x="267.8" y="487.6" width="4.2" height="4.2" rx="0.8"/>
<rect x="272.9" y="487.6" width="3.1" height="4.2" rx="0.8"/>
<rect x="261.2" y="500.2" width="1.6" height="1.6"/>
<rect x="263.8" y="499.1" width="4.2" height="4.2" rx="0.8"/>
<rect x="268.9" y="499.1" width="3.1" height="4.2" rx="0.8"/>
<rect x="263.2" y="507.5" width="1.6" height="1.6"/>
<rect x="265.8" y="506.4" width="5.1" height="4.2" rx="0.8"/>
<rect x="271.7" y="506.4" width="2.3" height="4.2" rx="0.8"/>
<rect x="170.8" y="520.4" width="1.6" height="1.6"/>
<rect x="173.4" y="519.3" width="4.8" height="4.2" rx="0.8"/>
<rect x="179.0" y="519.3" width="3.6" height="4.2" rx="0.8"/>
<rect x="266.2" y="465.4" width="1.6" height="1.6"/>
<rect x="268.8" y="464.3" width="3.1" height="4.2" rx="0.8"/>
<rect x="272.8" y="464.3" width="2.3" height="4.2" rx="0.8"/>
<rect x="512.9" y="85.8" width="1.6" height="1.6"/>
<rect x="515.5" y="84.7" width="3.9" height="4.2" rx="0.8"/>
<rect x="520.3" y="84.7" width="1.7" height="4.2" rx="0.8"/>
<rect x="487.4" y="105.4" width="1.6" height="1.6"/>
<rect x="490.0" y="104.3" width="3.3" height="4.2" rx="0.8"/>
<rect x="494.2" y="104.3" width="2.4" height="4.2" rx="0.8"/>
<rect x="494.2" y="112.9" width="1.6" height="1.6"/>
<rect x="496.8" y="111.8" width="3.3" height="4.2" rx="0.8"/>
<rect x="501.0" y="111.8" width="2.4" height="4.2" rx="0.8"/>
<rect x="512.0" y="111.2" width="1.6" height="1.6"/>
<rect x="514.6" y="110.1" width="5.1" height="4.2" rx="0.8"/>
<rect x="520.6" y="110.1" width="2.3" height="4.2" rx="0.8"/>
<rect x="512.0" y="122.4" width="1.6" height="1.6"/>
<rect x="514.6" y="121.3" width="4.2" height="4.2" rx="0.8"/>
<rect x="519.8" y="121.3" width="3.1" height="4.2" rx="0.8"/>
<rect x="493.4" y="133.2" width="1.6" height="1.6"/>
<rect x="496.0" y="132.1" width="4.2" height="4.2" rx="0.8"/>
<rect x="501.1" y="132.1" width="3.1" height="4.2" rx="0.8"/>
<rect x="493.4" y="142.7" width="1.6" height="1.6"/>
<rect x="496.0" y="141.6" width="5.1" height="4.2" rx="0.8"/>
<rect x="501.9" y="141.6" width="2.3" height="4.2" rx="0.8"/>
<rect x="501.9" y="162.1" width="1.6" height="1.6"/>
<rect x="504.5" y="161.0" width="4.2" height="4.2" rx="0.8"/>
<rect x="509.6" y="161.0" width="3.1" height="4.2" rx="0.8"/>
<rect x="495.1" y="179.7" width="1.6" height="1.6"/>
<rect x="497.7" y="178.6" width="4.2" height="4.2" rx="0.8"/>
<rect x="502.8" y="178.6" width="3.1" height="4.2" rx="0.8"/>
<rect x="491.7" y="206.1" width="1.6" height="1.6"/>
<rect x="494.3" y="205.0" width="5.1" height="4.2" rx="0.8"/>
<rect x="500.2" y="205.0" width="2.3" height="4.2" rx="0.8"/>
<rect x="481.7" y="217.3" width="1.6" height="1.6"/>
<rect x="484.3" y="216.2" width="3.3" height="4.2" rx="0.8"/>
<rect x="488.5" y="216.2" width="2.4" height="4.2" rx="0.8"/>
<rect x="481.7" y="229.8" width="1.6" height="1.6"/>
<rect x="484.3" y="228.7" width="3.3" height="4.2" rx="0.8"/>
<rect x="488.5" y="228.7" width="2.4" height="4.2" rx="0.8"/>
<rect x="515.4" y="239.0" width="1.6" height="1.6"/>
<rect x="518.0" y="237.9" width="5.1" height="4.2" rx="0.8"/>
<rect x="524.0" y="237.9" width="2.3" height="4.2" rx="0.8"/>
<rect x="517.1" y="257.0" width="1.6" height="1.6"/>
<rect x="519.7" y="255.9" width="4.2" height="4.2" rx="0.8"/>
<rect x="524.8" y="255.9" width="3.1" height="4.2" rx="0.8"/>
<rect x="485.8" y="260.4" width="1.6" height="1.6"/>
<rect x="488.4" y="259.3" width="3.3" height="4.2" rx="0.8"/>
<rect x="492.5" y="259.3" width="2.4" height="4.2" rx="0.8"/>
<rect x="488.5" y="286.5" width="1.6" height="1.6"/>
<rect x="491.1" y="285.4" width="3.9" height="4.2" rx="0.8"/>
<rect x="495.9" y="285.4" width="1.7" height="4.2" rx="0.8"/>
<rect x="515.4" y="289.8" width="1.6" height="1.6"/>
<rect x="518.0" y="288.7" width="4.2" height="4.2" rx="0.8"/>
<rect x="523.1" y="288.7" width="3.1" height="4.2" rx="0.8"/>
<rect x="489.3" y="295.3" width="1.6" height="1.6"/>
<rect x="491.9" y="294.2" width="2.3" height="4.2" rx="0.8"/>
<rect x="495.1" y="294.2" width="1.6" height="4.2" rx="0.8"/>
<rect x="518.0" y="313.4" width="1.6" height="1.6"/>
<rect x="520.6" y="312.3" width="6.2" height="4.2" rx="0.8"/>
<rect x="527.6" y="312.3" width="2.9" height="4.2" rx="0.8"/>
<rect x="493.4" y="319.5" width="1.6" height="1.6"/>
<rect x="496.0" y="318.4" width="4.2" height="4.2" rx="0.8"/>
<rect x="501.1" y="318.4" width="3.1" height="4.2" rx="0.8"/>
<rect x="480.7" y="346.6" width="1.6" height="1.6"/>
<rect x="483.3" y="345.5" width="3.3" height="4.2" rx="0.8"/>
<rect x="487.4" y="345.5" width="2.4" height="4.2" rx="0.8"/>
<rect x="498.3" y="355.8" width="1.6" height="1.6"/>
<rect x="500.9" y="354.7" width="6.2" height="4.2" rx="0.8"/>
<rect x="508.0" y="354.7" width="2.9" height="4.2" rx="0.8"/>
<rect x="521.3" y="363.6" width="1.6" height="1.6"/>
<rect x="523.9" y="362.5" width="5.2" height="4.2" rx="0.8"/>
<rect x="530.0" y="362.5" width="3.9" height="4.2" rx="0.8"/>
<rect x="491.5" y="373.1" width="1.6" height="1.6"/>
<rect x="494.1" y="372.0" width="5.2" height="4.2" rx="0.8"/>
<rect x="500.2" y="372.0" width="3.9" height="4.2" rx="0.8"/>
<rect x="521.3" y="394.8" width="1.6" height="1.6"/>
<rect x="523.9" y="393.7" width="6.2" height="4.2" rx="0.8"/>
<rect x="531.0" y="393.7" width="2.9" height="4.2" rx="0.8"/>
<rect x="492.5" y="401.5" width="1.6" height="1.6"/>
<rect x="495.1" y="400.4" width="5.2" height="4.2" rx="0.8"/>
<rect x="501.2" y="400.4" width="3.9" height="4.2" rx="0.8"/>
<rect x="523.0" y="410.0" width="1.6" height="1.6"/>
<rect x="525.6" y="408.9" width="5.2" height="4.2" rx="0.8"/>
<rect x="531.7" y="408.9" width="3.9" height="4.2" rx="0.8"/>
<rect x="494.9" y="424.6" width="1.6" height="1.6"/>
<rect x="497.5" y="423.5" width="6.2" height="4.2" rx="0.8"/>
<rect x="504.6" y="423.5" width="2.9" height="4.2" rx="0.8"/>
<rect x="523.0" y="426.3" width="1.6" height="1.6"/>
<rect x="525.6" y="425.2" width="5.2" height="4.2" rx="0.8"/>
<rect x="531.7" y="425.2" width="3.9" height="4.2" rx="0.8"/>
<rect x="523.9" y="444.9" width="1.6" height="1.6"/>
<rect x="526.5" y="443.8" width="6.1" height="4.2" rx="0.8"/>
<rect x="533.5" y="443.8" width="4.6" height="4.2" rx="0.8"/>
<rect x="492.5" y="453.4" width="1.6" height="1.6"/>
<rect x="495.1" y="452.3" width="6.2" height="4.2" rx="0.8"/>
<rect x="502.2" y="452.3" width="2.9" height="4.2" rx="0.8"/>
<rect x="524.7" y="462.6" width="1.6" height="1.6"/>
<rect x="527.3" y="461.5" width="5.2" height="4.2" rx="0.8"/>
<rect x="533.4" y="461.5" width="3.9" height="4.2" rx="0.8"/>
<rect x="482.7" y="469.5" width="3.1" height="3.8" rx="1"/>
<rect x="524.7" y="491.4" width="1.6" height="1.6"/>
<rect x="527.3" y="490.3" width="6.2" height="4.2" rx="0.8"/>
<rect x="534.4" y="490.3" width="2.9" height="4.2" rx="0.8"/>
<rect x="525.6" y="503.2" width="1.6" height="1.6"/>
<rect x="528.2" y="502.1" width="4.2" height="4.2" rx="0.8"/>
<rect x="533.3" y="502.1" width="3.1" height="4.2" rx="0.8"/>
<rect x="0.5" y="89.0" width="6.9" height="3.8" rx="1"/>
<rect x="13.4" y="88.9" width="1.6" height="1.6"/>
<rect x="16.0" y="87.8" width="6.4" height="4.2" rx="0.8"/>
<rect x="23.2" y="87.8" width="3.0" height="4.2" rx="0.8"/>
<rect x="47.0" y="91.9" width="1.6" height="1.6"/>
<rect x="49.6" y="90.8" width="5.3" height="4.2" rx="0.8"/>
<rect x="55.8" y="90.8" width="4.0" height="4.2" rx="0.8"/>
<rect x="0.5" y="96.9" width="4.9" height="3.8" rx="1"/>
<rect x="14.3" y="102.8" width="1.6" height="1.6"/>
<rect x="16.9" y="101.7" width="7.7" height="4.2" rx="0.8"/>
<rect x="25.5" y="101.7" width="3.7" height="4.2" rx="0.8"/>
<rect x="17.3" y="108.7" width="1.6" height="1.6"/>
<rect x="19.9" y="107.6" width="5.3" height="4.2" rx="0.8"/>
<rect x="26.1" y="107.6" width="4.0" height="4.2" rx="0.8"/>
<rect x="34.1" y="110.7" width="1.6" height="1.6"/>
<rect x="36.7" y="109.6" width="5.3" height="4.2" rx="0.8"/>
<rect x="42.9" y="109.6" width="4.0" height="4.2" rx="0.8"/>
<rect x="49.9" y="113.6" width="1.6" height="1.6"/>
<rect x="52.5" y="112.5" width="3.7" height="4.2" rx="0.8"/>
<rect x="57.2" y="112.5" width="1.6" height="4.2" rx="0.8"/>
<rect x="-0.5" y="115.6" width="1.6" height="1.6"/>
<rect x="2.1" y="114.5" width="3.1" height="4.2" rx="0.8"/>
<rect x="6.1" y="114.5" width="2.3" height="4.2" rx="0.8"/>
<rect x="21.3" y="119.6" width="1.6" height="1.6"/>
<rect x="23.9" y="118.5" width="3.1" height="4.2" rx="0.8"/>
<rect x="27.9" y="118.5" width="2.3" height="4.2" rx="0.8"/>
<rect x="23.7" y="133.4" width="1.6" height="1.6"/>
<rect x="26.3" y="132.3" width="5.7" height="4.2" rx="0.8"/>
<rect x="32.9" y="132.3" width="2.6" height="4.2" rx="0.8"/>
<rect x="39.1" y="137.4" width="1.6" height="1.6"/>
<rect x="41.7" y="136.3" width="4.2" height="4.2" rx="0.8"/>
<rect x="46.8" y="136.3" width="3.1" height="4.2" rx="0.8"/>
<rect x="0.5" y="134.4" width="1.6" height="1.6"/>
<rect x="3.1" y="133.3" width="3.1" height="4.2" rx="0.8"/>
<rect x="7.1" y="133.3" width="2.3" height="4.2" rx="0.8"/>
<rect x="-0.5" y="145.4" width="6.9" height="3.8" rx="1"/>
<rect x="23.7" y="146.7" width="1.6" height="1.6"/>
<rect x="26.3" y="145.6" width="4.8" height="4.2" rx="0.8"/>
<rect x="32.0" y="145.6" width="3.6" height="4.2" rx="0.8"/>
<rect x="33.1" y="157.1" width="1.6" height="1.6"/>
<rect x="35.7" y="156.0" width="4.2" height="4.2" rx="0.8"/>
<rect x="40.8" y="156.0" width="3.1" height="4.2" rx="0.8"/>
<rect x="53.4" y="155.2" width="1.6" height="1.6"/>
<rect x="56.0" y="154.1" width="5.7" height="4.2" rx="0.8"/>
<rect x="62.6" y="154.1" width="2.6" height="4.2" rx="0.8"/>
<rect x="61.8" y="163.1" width="1.6" height="1.6"/>
<rect x="64.4" y="162.0" width="4.2" height="4.2" rx="0.8"/>
<rect x="69.5" y="162.0" width="3.1" height="4.2" rx="0.8"/>
<rect x="0.5" y="167.0" width="1.6" height="1.6"/>
<rect x="3.1" y="165.9" width="5.3" height="4.2" rx="0.8"/>
<rect x="9.3" y="165.9" width="4.0" height="4.2" rx="0.8"/>
<rect x="12.4" y="173.0" width="1.6" height="1.6"/>
<rect x="15.0" y="171.9" width="3.7" height="4.2" rx="0.8"/>
<rect x="19.6" y="171.9" width="1.6" height="4.2" rx="0.8"/>
<rect x="54.4" y="173.0" width="1.6" height="1.6"/>
<rect x="57.0" y="171.9" width="4.8" height="4.2" rx="0.8"/>
<rect x="62.7" y="171.9" width="3.6" height="4.2" rx="0.8"/>
<rect x="19.8" y="182.8" width="1.6" height="1.6"/>
<rect x="22.4" y="181.7" width="4.8" height="4.2" rx="0.8"/>
<rect x="28.1" y="181.7" width="3.6" height="4.2" rx="0.8"/>
<rect x="7.9" y="191.3" width="1.6" height="1.6"/>
<rect x="10.5" y="190.2" width="5.7" height="4.2" rx="0.8"/>
<rect x="17.1" y="190.2" width="2.6" height="4.2" rx="0.8"/>
<rect x="39.1" y="197.7" width="1.6" height="1.6"/>
<rect x="41.7" y="196.6" width="4.2" height="4.2" rx="0.8"/>
<rect x="46.8" y="196.6" width="3.1" height="4.2" rx="0.8"/>
<rect x="25.2" y="203.6" width="1.6" height="1.6"/>
<rect x="27.8" y="202.5" width="4.2" height="4.2" rx="0.8"/>
<rect x="32.9" y="202.5" width="3.1" height="4.2" rx="0.8"/>
<rect x="15.3" y="207.6" width="1.6" height="1.6"/>
<rect x="17.9" y="206.5" width="3.7" height="4.2" rx="0.8"/>
<rect x="22.6" y="206.5" width="1.6" height="4.2" rx="0.8"/>
<rect x="78.6" y="129.5" width="1.6" height="1.6"/>
<rect x="81.2" y="128.4" width="3.1" height="4.2" rx="0.8"/>
<rect x="85.2" y="128.4" width="2.3" height="4.2" rx="0.8"/>
<rect x="81.6" y="142.4" width="6.9" height="3.8" rx="1"/>
<rect x="83.5" y="150.3" width="6.9" height="3.8" rx="1"/>
<rect x="98.9" y="89.9" width="1.6" height="1.6"/>
<rect x="101.5" y="88.8" width="3.7" height="4.2" rx="0.8"/>
<rect x="106.0" y="88.8" width="2.7" height="4.2" rx="0.8"/>
<rect x="102.3" y="96.4" width="1.6" height="1.6"/>
<rect x="104.9" y="95.3" width="4.2" height="4.2" rx="0.8"/>
<rect x="110.0" y="95.3" width="3.1" height="4.2" rx="0.8"/>
<rect x="116.2" y="95.0" width="6.9" height="3.8" rx="1"/>
<rect x="125.1" y="103.8" width="1.6" height="1.6"/>
<rect x="127.7" y="102.7" width="4.2" height="4.2" rx="0.8"/>
<rect x="132.8" y="102.7" width="3.1" height="4.2" rx="0.8"/>
<rect x="133.0" y="95.9" width="6.9" height="3.8" rx="1"/>
<rect x="101.3" y="117.6" width="1.6" height="1.6"/>
<rect x="103.9" y="116.5" width="6.4" height="4.2" rx="0.8"/>
<rect x="111.2" y="116.5" width="3.0" height="4.2" rx="0.8"/>
<rect x="101.3" y="128.9" width="1.6" height="1.6"/>
<rect x="103.9" y="127.8" width="4.2" height="4.2" rx="0.8"/>
<rect x="109.1" y="127.8" width="3.1" height="4.2" rx="0.8"/>
<rect x="137.4" y="138.4" width="1.6" height="1.6"/>
<rect x="140.0" y="137.3" width="4.8" height="4.2" rx="0.8"/>
<rect x="145.7" y="137.3" width="3.6" height="4.2" rx="0.8"/>
<rect x="140.4" y="159.1" width="1.6" height="1.6"/>
<rect x="143.0" y="158.0" width="5.7" height="4.2" rx="0.8"/>
<rect x="149.6" y="158.0" width="2.6" height="4.2" rx="0.8"/>
<rect x="145.8" y="185.8" width="1.6" height="1.6"/>
<rect x="148.4" y="184.7" width="3.1" height="4.2" rx="0.8"/>
<rect x="152.4" y="184.7" width="2.3" height="4.2" rx="0.8"/>
<rect x="145.8" y="205.6" width="1.6" height="1.6"/>
<rect x="148.4" y="204.5" width="3.1" height="4.2" rx="0.8"/>
<rect x="152.4" y="204.5" width="2.3" height="4.2" rx="0.8"/>
<rect x="103.3" y="140.3" width="1.6" height="1.6"/>
<rect x="105.9" y="139.2" width="3.7" height="4.2" rx="0.8"/>
<rect x="110.6" y="139.2" width="1.6" height="4.2" rx="0.8"/>
<rect x="102.3" y="148.2" width="1.6" height="1.6"/>
<rect x="104.9" y="147.1" width="3.1" height="4.2" rx="0.8"/>
<rect x="108.9" y="147.1" width="2.3" height="4.2" rx="0.8"/>
<rect x="101.8" y="163.1" width="1.6" height="1.6"/>
<rect x="104.4" y="162.0" width="4.8" height="4.2" rx="0.8"/>
<rect x="110.1" y="162.0" width="3.6" height="4.2" rx="0.8"/>
<rect x="89.5" y="163.2" width="6.9" height="3.8" rx="1"/>
<rect x="113.2" y="170.0" width="1.6" height="1.6"/>
<rect x="115.8" y="168.9" width="3.1" height="4.2" rx="0.8"/>
<rect x="119.8" y="168.9" width="2.3" height="4.2" rx="0.8"/>
<rect x="87.5" y="173.9" width="1.6" height="1.6"/>
<rect x="90.1" y="172.8" width="4.2" height="4.2" rx="0.8"/>
<rect x="95.2" y="172.8" width="3.1" height="4.2" rx="0.8"/>
<rect x="113.2" y="176.9" width="1.6" height="1.6"/>
<rect x="115.8" y="175.8" width="5.1" height="4.2" rx="0.8"/>
<rect x="121.7" y="175.8" width="2.3" height="4.2" rx="0.8"/>
<rect x="85.5" y="183.8" width="1.6" height="1.6"/>
<rect x="88.1" y="182.7" width="4.2" height="4.2" rx="0.8"/>
<rect x="93.2" y="182.7" width="3.1" height="4.2" rx="0.8"/>
<rect x="118.1" y="185.8" width="1.6" height="1.6"/>
<rect x="120.7" y="184.7" width="3.1" height="4.2" rx="0.8"/>
<rect x="124.8" y="184.7" width="2.3" height="4.2" rx="0.8"/>
<rect x="101.8" y="199.6" width="1.6" height="1.6"/>
<rect x="104.4" y="198.5" width="5.7" height="4.2" rx="0.8"/>
<rect x="111.0" y="198.5" width="2.6" height="4.2" rx="0.8"/>
<rect x="121.1" y="194.7" width="1.6" height="1.6"/>
<rect x="123.7" y="193.6" width="3.1" height="4.2" rx="0.8"/>
<rect x="127.7" y="193.6" width="2.3" height="4.2" rx="0.8"/>
<rect x="118.1" y="203.6" width="1.6" height="1.6"/>
<rect x="120.7" y="202.5" width="3.1" height="4.2" rx="0.8"/>
<rect x="124.8" y="202.5" width="2.3" height="4.2" rx="0.8"/>
<rect x="78.6" y="196.7" width="1.6" height="1.6"/>
<rect x="81.2" y="195.6" width="3.7" height="4.2" rx="0.8"/>
<rect x="85.8" y="195.6" width="1.6" height="4.2" rx="0.8"/>
<rect x="55.9" y="199.6" width="1.6" height="1.6"/>
<rect x="58.5" y="198.5" width="6.4" height="4.2" rx="0.8"/>
<rect x="65.8" y="198.5" width="4.9" height="4.2" rx="0.8"/>
<rect x="74.6" y="201.6" width="1.6" height="1.6"/>
<rect x="77.2" y="200.5" width="3.1" height="4.2" rx="0.8"/>
<rect x="81.3" y="200.5" width="2.3" height="4.2" rx="0.8"/>
<rect x="64.8" y="207.6" width="1.6" height="1.6"/>
<rect x="67.4" y="206.5" width="3.7" height="4.2" rx="0.8"/>
<rect x="72.0" y="206.5" width="1.6" height="4.2" rx="0.8"/>
<rect x="112.2" y="112.7" width="1.6" height="1.6"/>
<rect x="114.8" y="111.6" width="3.1" height="4.2" rx="0.8"/>
<rect x="118.8" y="111.6" width="2.3" height="4.2" rx="0.8"/>
<rect x="117.1" y="121.6" width="6.9" height="3.8" rx="1"/>
<rect x="113.2" y="139.4" width="6.9" height="3.8" rx="1"/>
<rect x="114.2" y="156.2" width="1.6" height="1.6"/>
<rect x="116.8" y="155.1" width="3.1" height="4.2" rx="0.8"/>
<rect x="120.8" y="155.1" width="2.3" height="4.2" rx="0.8"/>
<rect x="9.9" y="353.2" width="1.6" height="1.6"/>
<rect x="12.5" y="352.1" width="4.8" height="4.2" rx="0.8"/>
<rect x="18.2" y="352.1" width="3.6" height="4.2" rx="0.8"/>
<rect x="73.7" y="341.0" width="1.6" height="1.6"/>
<rect x="76.3" y="339.9" width="3.7" height="4.2" rx="0.8"/>
<rect x="80.9" y="339.9" width="1.6" height="4.2" rx="0.8"/>
<rect x="92.4" y="347.9" width="1.6" height="1.6"/>
<rect x="95.0" y="346.8" width="3.1" height="4.2" rx="0.8"/>
<rect x="99.1" y="346.8" width="2.3" height="4.2" rx="0.8"/>
<rect x="115.2" y="363.7" width="1.6" height="1.6"/>
<rect x="117.8" y="362.6" width="4.2" height="4.2" rx="0.8"/>
<rect x="122.9" y="362.6" width="3.1" height="4.2" rx="0.8"/>
<rect x="131.5" y="368.3" width="1.6" height="1.6"/>
<rect x="134.1" y="367.2" width="4.4" height="4.2" rx="0.8"/>
<rect x="139.4" y="367.2" width="2.0" height="4.2" rx="0.8"/>
<rect x="130.5" y="384.1" width="1.6" height="1.6"/>
<rect x="133.1" y="383.0" width="4.8" height="4.2" rx="0.8"/>
<rect x="138.8" y="383.0" width="3.6" height="4.2" rx="0.8"/>
<rect x="132.0" y="403.8" width="1.6" height="1.6"/>
<rect x="134.6" y="402.7" width="4.2" height="4.2" rx="0.8"/>
<rect x="139.7" y="402.7" width="3.1" height="4.2" rx="0.8"/>
<rect x="102.8" y="414.1" width="1.6" height="1.6"/>
<rect x="105.4" y="413.0" width="5.7" height="4.2" rx="0.8"/>
<rect x="112.0" y="413.0" width="2.6" height="4.2" rx="0.8"/>
<rect x="22.2" y="373.0" width="1.6" height="1.6"/>
<rect x="24.8" y="371.9" width="3.1" height="4.2" rx="0.8"/>
<rect x="28.9" y="371.9" width="2.3" height="4.2" rx="0.8"/>
<rect x="8.4" y="391.4" width="1.6" height="1.6"/>
<rect x="11.0" y="390.3" width="3.1" height="4.2" rx="0.8"/>
<rect x="15.0" y="390.3" width="2.3" height="4.2" rx="0.8"/>
<rect x="40.0" y="398.3" width="1.6" height="1.6"/>
<rect x="42.6" y="397.2" width="5.1" height="4.2" rx="0.8"/>
<rect x="48.6" y="397.2" width="2.3" height="4.2" rx="0.8"/>
<rect x="50.9" y="382.6" width="16.8" height="3.8" rx="1"/>
<rect x="84.5" y="386.5" width="16.8" height="3.8" rx="1"/>
<rect x="107.3" y="388.4" width="1.6" height="1.6"/>
<rect x="109.9" y="387.3" width="5.1" height="4.2" rx="0.8"/>
<rect x="115.8" y="387.3" width="2.3" height="4.2" rx="0.8"/>
<rect x="64.8" y="403.3" width="18.8" height="3.8" rx="1"/>
<rect x="29.2" y="415.1" width="1.6" height="1.6"/>
<rect x="31.8" y="414.0" width="3.1" height="4.2" rx="0.8"/>
<rect x="35.8" y="414.0" width="2.3" height="4.2" rx="0.8"/>
<rect x="29.2" y="424.1" width="6.9" height="3.8" rx="1"/>
<rect x="53.9" y="428.0" width="1.6" height="1.6"/>
<rect x="56.5" y="426.9" width="4.2" height="4.2" rx="0.8"/>
<rect x="61.6" y="426.9" width="3.1" height="4.2" rx="0.8"/>
<rect x="77.6" y="431.9" width="1.6" height="1.6"/>
<rect x="80.2" y="430.8" width="5.3" height="4.2" rx="0.8"/>
<rect x="86.4" y="430.8" width="4.0" height="4.2" rx="0.8"/>
<rect x="95.4" y="433.0" width="6.9" height="3.8" rx="1"/>
<rect x="115.2" y="429.0" width="1.6" height="1.6"/>
<rect x="117.8" y="427.9" width="4.2" height="4.2" rx="0.8"/>
<rect x="122.9" y="427.9" width="3.1" height="4.2" rx="0.8"/>
<rect x="135.9" y="430.9" width="1.6" height="1.6"/>
<rect x="138.5" y="429.8" width="5.3" height="4.2" rx="0.8"/>
<rect x="144.8" y="429.8" width="4.0" height="4.2" rx="0.8"/>
<rect x="70.2" y="442.8" width="1.6" height="1.6"/>
<rect x="72.8" y="441.7" width="5.7" height="4.2" rx="0.8"/>
<rect x="79.4" y="441.7" width="2.6" height="4.2" rx="0.8"/>
<rect x="41.0" y="444.8" width="1.6" height="1.6"/>
<rect x="43.6" y="443.7" width="4.2" height="4.2" rx="0.8"/>
<rect x="48.8" y="443.7" width="3.1" height="4.2" rx="0.8"/>
<rect x="95.4" y="441.4" width="1.6" height="1.6"/>
<rect x="98.0" y="440.3" width="4.2" height="4.2" rx="0.8"/>
<rect x="103.1" y="440.3" width="3.1" height="4.2" rx="0.8"/>
<rect x="143.8" y="442.8" width="1.6" height="1.6"/>
<rect x="146.4" y="441.7" width="5.1" height="4.2" rx="0.8"/>
<rect x="152.4" y="441.7" width="2.3" height="4.2" rx="0.8"/>
<rect x="11.4" y="447.7" width="1.6" height="1.6"/>
<rect x="14.0" y="446.6" width="4.2" height="4.2" rx="0.8"/>
<rect x="19.1" y="446.6" width="3.1" height="4.2" rx="0.8"/>
<rect x="59.8" y="449.7" width="1.6" height="1.6"/>
<rect x="62.4" y="448.6" width="4.2" height="4.2" rx="0.8"/>
<rect x="67.5" y="448.6" width="3.1" height="4.2" rx="0.8"/>
<rect x="53.9" y="454.7" width="1.6" height="1.6"/>
<rect x="56.5" y="453.6" width="3.7" height="4.2" rx="0.8"/>
<rect x="61.1" y="453.6" width="1.6" height="4.2" rx="0.8"/>
<rect x="135.9" y="451.3" width="1.6" height="1.6"/>
<rect x="138.5" y="450.2" width="4.2" height="4.2" rx="0.8"/>
<rect x="143.7" y="450.2" width="3.1" height="4.2" rx="0.8"/>
<rect x="30.2" y="463.6" width="1.6" height="1.6"/>
<rect x="32.8" y="462.5" width="4.2" height="4.2" rx="0.8"/>
<rect x="37.9" y="462.5" width="3.1" height="4.2" rx="0.8"/>
<rect x="61.8" y="464.5" width="1.6" height="1.6"/>
<rect x="64.4" y="463.4" width="5.1" height="4.2" rx="0.8"/>
<rect x="70.3" y="463.4" width="2.3" height="4.2" rx="0.8"/>
<rect x="118.1" y="460.0" width="1.6" height="1.6"/>
<rect x="120.7" y="458.9" width="6.4" height="4.2" rx="0.8"/>
<rect x="128.1" y="458.9" width="4.9" height="4.2" rx="0.8"/>
<rect x="40.0" y="350.9" width="1.6" height="1.6"/>
<rect x="42.6" y="349.8" width="4.2" height="4.2" rx="0.8"/>
<rect x="47.8" y="349.8" width="3.1" height="4.2" rx="0.8"/>
<rect x="37.1" y="368.7" width="1.6" height="1.6"/>
<rect x="39.7" y="367.6" width="3.7" height="4.2" rx="0.8"/>
<rect x="44.3" y="367.6" width="1.6" height="4.2" rx="0.8"/>
<rect x="45.0" y="376.6" width="1.6" height="1.6"/>
<rect x="47.6" y="375.5" width="3.1" height="4.2" rx="0.8"/>
<rect x="51.6" y="375.5" width="2.3" height="4.2" rx="0.8"/>
<rect x="60.8" y="358.9" width="16.8" height="3.8" rx="1"/>
<rect x="64.8" y="365.7" width="1.6" height="1.6"/>
<rect x="67.4" y="364.6" width="6.4" height="4.2" rx="0.8"/>
<rect x="74.6" y="364.6" width="3.0" height="4.2" rx="0.8"/>
<rect x="78.6" y="358.8" width="1.6" height="1.6"/>
<rect x="81.2" y="357.7" width="3.1" height="4.2" rx="0.8"/>
<rect x="85.2" y="357.7" width="2.3" height="4.2" rx="0.8"/>
<rect x="106.3" y="371.6" width="1.6" height="1.6"/>
<rect x="108.9" y="370.5" width="3.1" height="4.2" rx="0.8"/>
<rect x="112.9" y="370.5" width="2.3" height="4.2" rx="0.8"/>
<rect x="115.2" y="340.1" width="6.9" height="3.8" rx="1"/>
<rect x="14.3" y="86.1" width="1.6" height="1.6"/>
<rect x="16.9" y="85.0" width="6.2" height="4.2" rx="0.8"/>
<rect x="23.9" y="85.0" width="4.7" height="4.2" rx="0.8"/>
<rect x="14.8" y="92.4" width="1.6" height="1.6"/>
<rect x="17.4" y="91.3" width="4.4" height="4.2" rx="0.8"/>
<rect x="22.7" y="91.3" width="3.3" height="4.2" rx="0.8"/>
<rect x="0.5" y="94.2" width="1.6" height="1.6"/>
<rect x="3.1" y="93.1" width="2.6" height="4.2" rx="0.8"/>
<rect x="6.6" y="93.1" width="1.1" height="4.2" rx="0.8"/>
<rect x="14.3" y="106.0" width="1.6" height="1.6"/>
<rect x="16.9" y="104.9" width="6.2" height="4.2" rx="0.8"/>
<rect x="23.9" y="104.9" width="4.7" height="4.2" rx="0.8"/>
<rect x="15.3" y="112.8" width="1.6" height="1.6"/>
<rect x="17.9" y="111.7" width="3.9" height="4.2" rx="0.8"/>
<rect x="22.7" y="111.7" width="2.9" height="4.2" rx="0.8"/>
<rect x="49.0" y="95.2" width="1.6" height="1.6"/>
<rect x="51.6" y="94.1" width="2.6" height="4.2" rx="0.8"/>
<rect x="55.1" y="94.1" width="1.1" height="4.2" rx="0.8"/>
<rect x="13.8" y="99.3" width="1.6" height="1.6"/>
<rect x="16.4" y="98.2" width="3.3" height="4.2" rx="0.8"/>
<rect x="20.6" y="98.2" width="2.4" height="4.2" rx="0.8"/>
<rect x="243.4" y="252.6" width="34.6" height="3.8" rx="1"/>
<rect x="254.3" y="247.7" width="28.7" height="3.8" rx="1"/>
<rect x="242.4" y="257.2" width="20.7" height="3.8" rx="1"/>
</g>
<g fill="none" stroke-width="1.7" stroke-linejoin="round" stroke-linecap="round" filter="url(#lb)">
<path stroke="#f3ea6a" d="M1.6 87.0 C1.8 88.3 2.6 92.7 3.1 95.3 C3.5 97.8 3.7 100.0 4.1 102.4 C4.4 104.8 4.4 107.3 5.1 109.5 C5.8 111.7 6.8 113.9 8.2 115.6 C9.5 117.3 11.3 118.2 13.2 119.7 C15.2 121.2 16.7 123.0 19.8 124.5 C22.8 126.1 27.8 128.3 31.6 129.1 C35.4 129.9 38.9 130.2 42.5 129.5 C46.1 128.7 49.9 126.5 53.4 124.5 C56.8 122.6 60.1 120.2 63.3 117.6 C66.4 115.0 69.5 111.7 72.2 108.7 C74.8 105.7 76.9 102.6 79.1 99.8 C81.2 97.0 83.4 94.2 85.0 91.9 C86.7 89.6 88.3 87.0 89.0 86.0"/>
<path stroke="#f3ea6a" d="M0.0 126.5 C1.5 126.7 6.1 126.9 8.9 127.9 C11.7 128.9 14.8 130.4 16.8 132.4 C18.8 134.5 20.3 137.4 20.8 140.3 C21.2 143.3 20.7 147.4 19.4 150.2 C18.1 153.0 15.3 155.0 12.9 157.2 C10.4 159.3 7.1 161.4 4.9 163.1 C2.8 164.7 0.8 166.4 0.0 167.0"/>
<path stroke="#f3ea6a" d="M0.0 132.4 C0.7 132.8 3.9 133.1 4.3 134.4 C4.8 135.7 3.7 139.0 3.0 140.3 C2.2 141.7 0.5 142.0 0.0 142.3"/>
<path stroke="#f3ea6a" d="M0.0 178.9 C1.6 177.7 6.3 174.2 9.9 172.0 C13.5 169.7 18.0 167.2 21.7 165.5 C25.5 163.7 29.7 162.6 32.6 161.7 C35.5 160.8 38.0 161.7 39.1 160.1 C40.3 158.5 39.0 154.7 39.5 152.2 C40.1 149.7 40.9 146.9 42.5 145.3 C44.2 143.7 46.6 143.2 49.4 142.5 C52.2 141.9 56.0 141.6 59.3 141.3 C62.6 141.1 66.1 141.2 69.2 140.9 C72.3 140.7 76.4 141.0 78.1 139.8 C79.8 138.5 80.0 135.5 79.5 133.4 C79.0 131.3 74.9 128.7 75.1 127.1 C75.4 125.5 78.8 125.1 81.1 123.5 C83.4 122.0 86.3 119.9 89.0 117.6 C91.6 115.3 93.9 112.3 96.9 109.7 C99.8 107.1 104.0 104.3 106.8 101.8 C109.6 99.3 111.8 97.4 113.7 94.9 C115.6 92.3 117.5 87.8 118.2 86.4"/>
<path stroke="#f3ea6a" d="M84.0 163.1 C84.4 161.9 85.5 161.6 86.0 162.1 C86.5 162.6 87.0 164.7 87.0 166.0 C87.0 167.4 86.5 169.5 86.0 170.0 C85.5 170.5 84.4 170.2 84.0 169.0 C83.7 167.9 83.7 164.2 84.0 163.1Z"/>
<path stroke="#38e05a" d="M12.9 86.0 C12.8 87.6 12.3 92.9 12.3 95.9 C12.3 98.8 12.8 102.5 12.9 103.8"/>
<path stroke="#38e05a" d="M61.3 86.0 C61.0 87.6 60.6 92.4 59.3 95.9 C58.0 99.3 55.4 103.4 53.4 106.7 C51.4 110.0 50.1 113.5 47.4 115.6 C44.8 117.8 40.5 119.1 37.6 119.6 C34.6 120.1 31.0 118.8 29.7 118.6"/>
<path stroke="#f3ea6a" d="M0.0 186.8 C1.3 186.0 4.6 183.2 7.9 181.9 C11.2 180.5 16.1 179.1 19.8 178.9 C23.4 178.7 26.9 179.6 29.7 180.9 C32.5 182.2 34.8 184.5 36.6 186.8 C38.4 189.1 40.0 192.4 40.5 194.7 C41.0 197.0 41.0 198.7 39.5 200.6 C38.1 202.6 34.3 204.7 31.6 206.6 C29.0 208.5 25.0 211.0 23.7 211.9"/>
<path stroke="#f3ea6a" d="M73.2 174.0 C72.3 174.8 69.7 176.1 68.2 178.9 C66.7 181.7 65.2 187.1 64.3 190.8 C63.3 194.4 63.4 198.3 62.3 200.6 C61.1 203.0 60.1 204.3 57.3 204.6 C54.5 204.9 48.4 203.3 45.5 202.6 C42.5 202.0 40.5 201.0 39.5 200.6"/>
<path stroke="#f3ea6a" d="M73.2 174.0 C74.5 174.1 79.1 173.8 81.1 174.9 C83.0 176.1 84.7 178.2 85.0 180.9 C85.3 183.5 83.9 187.8 83.0 190.8 C82.2 193.7 81.4 196.7 80.1 198.7 C78.8 200.6 76.9 201.5 75.1 202.6 C73.3 203.8 70.8 204.0 69.2 205.6 C67.5 207.1 65.9 210.9 65.2 211.9"/>
<path stroke="#38e05a" d="M182.8 85.6 C182.4 87.1 180.6 91.6 180.7 94.2 C180.9 96.9 181.8 99.6 183.8 101.4 C185.9 103.2 189.4 104.6 193.0 105.1 C196.6 105.6 201.7 105.3 205.3 104.5 C208.9 103.7 212.5 102.3 214.5 100.4 C216.6 98.5 217.6 95.7 217.6 93.2 C217.6 90.8 215.0 86.9 214.5 85.6"/>
<path stroke="#38e05a" d="M150.0 214.1 C151.4 214.1 155.8 213.6 158.2 214.1 C160.6 214.6 163.3 216.5 164.3 217.0"/>
<path stroke="#f3ea6a" d="M150.0 91.2 C150.9 91.7 153.9 92.7 155.1 94.2 C156.3 95.8 157.5 98.5 157.2 100.4 C156.8 102.3 154.3 104.5 153.1 105.5 C151.9 106.5 150.5 106.4 150.0 106.5"/>
<path stroke="#f3ea6a" d="M18.8 212.0 C18.9 213.6 18.9 218.3 19.8 221.9 C20.6 225.5 21.7 229.8 23.7 233.7 C25.7 237.7 28.5 241.8 31.6 245.6 C34.8 249.4 39.5 254.0 42.5 256.5 C45.5 259.0 46.6 260.6 49.4 260.4 C52.2 260.3 55.7 257.3 59.3 255.5 C62.9 253.7 67.2 251.9 71.2 249.6 C75.1 247.3 80.1 244.6 83.0 241.7 C86.0 238.7 87.8 235.1 89.0 231.8 C90.1 228.5 90.0 225.2 90.0 221.9 C90.0 218.6 89.1 213.6 89.0 212.0"/>
<path stroke="#f3ea6a" d="M24.7 212.0 C25.0 213.6 25.5 218.6 26.7 221.9 C27.8 225.2 29.3 228.1 31.6 231.8 C33.9 235.4 37.6 240.5 40.5 243.6 C43.5 246.8 46.3 250.2 49.4 250.6 C52.6 250.9 55.7 247.6 59.3 245.6 C62.9 243.6 67.7 241.0 71.2 238.7 C74.6 236.4 77.9 234.6 80.1 231.8 C82.2 229.0 83.4 225.2 84.0 221.9 C84.7 218.6 84.0 213.6 84.0 212.0"/>
<path stroke="#f3ea6a" d="M31.6 212.0 C31.8 213.3 31.3 216.6 32.6 219.9 C33.9 223.2 36.7 228.0 39.5 231.8 C42.3 235.6 46.1 242.0 49.4 242.6 C52.7 243.3 56.2 238.0 59.3 235.7 C62.4 233.4 66.4 231.4 68.2 228.8 C70.0 226.2 70.0 222.7 70.2 219.9 C70.3 217.1 69.4 213.3 69.2 212.0"/>
<path stroke="#38e05a" d="M96.9 222.9 C97.4 221.2 99.0 218.4 100.8 217.9 C102.6 217.4 105.4 218.4 107.7 219.9 C110.1 221.4 113.4 224.9 114.7 226.8 C116.0 228.8 116.3 230.7 115.7 231.8 C115.0 232.9 112.9 233.4 110.7 233.4 C108.6 233.4 104.9 232.7 102.8 231.8 C100.7 230.8 98.9 229.3 97.9 227.8 C96.9 226.3 96.4 224.5 96.9 222.9Z"/>
<path stroke="#38e05a" d="M155.0 322.7 C153.6 323.7 149.4 327.0 146.3 328.6 C143.2 330.3 139.7 331.3 136.4 332.6 C133.1 333.9 129.2 335.3 126.5 336.6 C123.9 337.8 121.6 339.4 120.6 339.9"/>
<path stroke="#f3ea6a" d="M227.1 257.5 C228.3 255.8 230.1 253.5 233.0 251.5 C236.0 249.6 240.9 247.3 244.9 245.6 C248.9 244.0 252.8 242.5 256.8 241.7 C260.7 240.8 264.7 241.2 268.6 240.7 C272.6 240.2 276.9 239.2 280.5 238.7 C284.1 238.2 287.9 236.9 290.4 237.7 C292.8 238.5 294.3 241.3 295.3 243.6 C296.3 245.9 297.5 249.1 296.3 251.5 C295.1 254.0 291.7 256.8 288.4 258.5 C285.1 260.1 281.1 260.5 276.5 261.4 C271.9 262.3 266.0 263.1 260.7 263.8 C255.4 264.5 249.5 265.1 244.9 265.4 C240.3 265.6 236.2 266.0 233.0 265.4 C229.9 264.7 227.1 262.7 226.1 261.4 C225.1 260.1 226.0 259.1 227.1 257.5Z"/>
<path stroke="#ffb428" d="M253.8 253.5 C254.1 252.4 259.2 251.7 262.7 250.6 C266.2 249.4 270.9 247.8 274.6 246.6 C278.2 245.4 283.3 243.3 284.4 243.6 C285.6 244.0 283.8 246.8 281.5 248.6 C279.2 250.4 274.1 253.0 270.6 254.5 C267.1 256.0 263.5 257.6 260.7 257.5 C257.9 257.3 253.5 254.7 253.8 253.5Z"/>
<path stroke="#38e05a" d="M150.0 326.7 C151.3 326.0 155.6 324.7 157.9 322.7 C160.2 320.7 162.5 318.1 163.8 314.8 C165.2 311.5 164.5 306.2 165.8 302.9 C167.1 299.6 168.8 296.8 171.7 295.0 C174.7 293.2 179.0 293.2 183.6 292.1 C188.2 290.9 194.2 289.4 199.4 288.1 C204.7 286.8 210.3 285.5 215.2 284.2 C220.2 282.8 224.1 281.2 229.1 280.2 C234.0 279.2 239.6 278.6 244.9 278.2 C250.2 277.9 256.1 278.2 260.7 278.2 C265.3 278.2 269.0 278.6 272.6 278.2 C276.2 277.9 279.5 277.2 282.5 276.3 C285.4 275.3 288.1 273.6 290.4 272.3 C292.7 271.0 294.8 269.3 296.3 268.3 C297.8 267.4 299.1 266.7 299.7 266.4"/>
<path stroke="#f3ea6a" d="M142.9 86.0 C143.9 86.7 146.9 88.4 149.0 90.1 C151.0 91.8 153.9 94.3 155.1 96.2 C156.3 98.2 156.8 100.2 156.1 101.9 C155.4 103.6 153.1 104.7 151.0 106.4 C149.0 108.2 146.1 110.5 143.9 112.6 C141.7 114.6 139.8 116.3 137.8 118.7 C135.7 121.1 133.2 124.1 131.6 126.9 C130.1 129.6 129.0 132.3 128.6 135.0 C128.1 137.7 128.7 140.7 129.1 143.2 C129.4 145.7 130.0 146.6 130.6 150.0 C131.3 153.5 132.3 159.2 133.0 163.9 C133.7 168.5 134.5 173.1 135.1 177.7 C135.7 182.4 136.1 187.0 136.5 191.6 C136.8 196.2 136.6 201.5 137.2 205.5 C137.7 209.4 137.8 211.6 139.9 215.2 C142.1 218.8 146.9 223.9 149.9 226.9 C153.0 229.9 155.0 230.9 158.3 233.2 C161.5 235.5 165.9 238.4 169.3 240.8 C172.8 243.2 175.8 246.0 179.1 247.7 C182.3 249.5 186.0 251.4 188.8 251.2 C191.5 251.0 193.8 247.5 195.7 246.4 C197.6 245.2 197.7 244.7 200.0 244.3 C202.3 243.8 205.1 244.6 209.3 243.6 C213.5 242.7 220.2 240.5 225.1 238.7 C230.1 236.9 235.0 234.4 239.0 232.8 C242.9 231.1 245.2 229.6 248.9 228.8 C252.5 228.0 257.1 227.7 260.7 227.8 C264.3 228.0 267.6 228.8 270.6 229.8 C273.6 230.8 275.5 232.8 278.5 233.7 C281.5 234.7 285.4 234.4 288.4 235.7 C291.4 237.0 294.4 239.0 296.3 241.7 C298.2 244.3 299.1 249.9 299.7 251.5"/>
<path stroke="#f3ea6a" d="M131.6 86.6 C132.7 87.1 135.7 88.7 137.8 90.1 C139.8 91.6 142.4 93.7 143.9 95.2 C145.3 96.8 146.6 98.0 146.4 99.3 C146.3 100.6 144.5 101.6 142.9 102.9 C141.2 104.2 138.8 105.4 136.7 107.0 C134.7 108.5 132.5 110.1 130.6 112.1 C128.7 114.0 126.9 116.2 125.5 118.7 C124.1 121.2 123.0 124.1 122.4 126.9 C121.9 129.6 121.8 132.3 121.9 135.0 C122.1 137.7 122.9 140.7 123.5 143.2 C124.1 145.7 124.8 146.6 125.5 150.0 C126.2 153.5 126.8 159.2 127.4 163.9 C128.1 168.5 128.8 173.1 129.5 177.7 C130.2 182.4 131.1 187.0 131.6 191.6 C132.1 196.2 131.8 201.5 132.3 205.5 C132.8 209.4 133.1 211.4 134.4 215.2 C135.7 219.0 138.3 225.0 140.2 228.3 C142.1 231.7 143.2 232.7 145.8 235.3 C148.3 237.8 152.2 241.2 155.5 243.6 C158.7 246.0 162.2 247.6 165.2 249.8 C168.2 252.0 170.5 254.8 173.5 256.8 C176.5 258.7 180.4 260.1 183.2 261.6 C186.0 263.1 188.9 264.4 190.2 265.8 C191.4 267.2 192.0 268.7 190.8 269.9 C189.7 271.2 186.3 272.5 183.2 273.4 C180.1 274.3 175.6 274.8 172.1 275.5 C168.7 276.2 165.2 276.6 162.4 277.6 C159.6 278.5 157.8 279.8 155.5 281.0 C153.2 282.3 150.9 284.8 148.5 285.2 C146.2 285.5 143.7 284.0 141.6 283.1 C139.5 282.2 138.4 280.2 136.1 279.6 C133.7 279.1 130.3 279.2 127.7 279.6 C125.2 280.1 122.9 281.3 120.8 282.4 C118.7 283.6 116.6 284.7 115.3 286.6 C113.9 288.4 113.3 290.7 112.5 293.5 C111.7 296.3 111.4 299.0 110.4 303.2 C109.4 307.4 107.2 314.2 106.8 318.8 C106.3 323.3 107.5 327.1 107.7 330.6 C108.0 334.1 108.2 338.4 108.3 339.9"/>
<path stroke="#f3ea6a" d="M79.1 211.9 C80.1 211.0 83.7 208.8 85.0 206.6 C86.3 204.4 85.8 201.0 87.0 198.7 C88.1 196.4 90.0 194.5 91.9 192.7 C93.9 190.9 97.0 189.6 98.9 187.8 C100.7 186.0 102.8 183.7 102.8 181.9 C102.8 180.1 100.3 179.4 98.9 176.9 C97.4 174.4 95.2 170.7 93.9 167.0 C92.7 163.4 91.9 159.1 91.3 155.2 C90.8 151.2 90.8 146.9 90.5 143.3 C90.3 139.7 89.6 136.6 90.0 133.4 C90.4 130.3 91.1 127.8 92.9 124.5 C94.7 121.2 98.6 115.8 100.8 113.7 C103.0 111.5 104.2 112.0 106.1 111.6 C108.0 111.1 110.5 110.7 112.2 111.0 C113.9 111.4 115.4 112.3 116.3 113.6 C117.3 114.9 117.9 116.8 117.9 118.7 C117.9 120.6 116.8 122.9 116.3 124.8 C115.9 126.7 115.3 127.9 115.3 129.9 C115.3 132.0 115.8 134.5 116.3 137.1 C116.8 139.6 117.7 143.1 118.4 145.2 C119.0 147.4 120.2 146.9 120.4 150.0 C120.7 153.1 119.6 159.2 119.8 163.9 C120.1 168.5 121.1 173.1 121.9 177.7 C122.7 182.4 124.1 187.0 124.7 191.6 C125.3 196.2 125.1 201.8 125.4 205.5 C125.6 209.2 125.4 209.1 126.1 213.8 C126.7 218.5 127.7 228.7 129.1 233.9 C130.6 239.1 131.9 242.8 134.7 245.0 C137.4 247.2 143.0 245.7 145.8 247.0 C148.5 248.4 149.7 251.3 151.3 253.3 C152.9 255.3 155.0 257.0 155.5 258.8 C155.9 260.7 155.2 263.5 154.1 264.4 C152.9 265.3 150.2 265.3 148.5 264.4 C146.9 263.5 145.5 260.1 144.4 258.8 C143.2 257.6 142.8 256.9 141.6 256.8 C140.5 256.6 138.6 257.3 137.4 258.1 C136.3 259.0 136.3 260.8 134.7 261.6 C133.1 262.4 130.1 262.3 127.7 263.0 C125.4 263.7 123.1 265.0 120.8 265.8 C118.5 266.6 116.2 267.3 113.9 267.9 C111.6 268.4 109.2 268.8 106.9 269.2 C104.6 269.7 103.0 270.3 100.0 270.6 C97.0 271.0 91.8 271.7 89.0 271.3 C86.1 270.9 84.7 270.0 83.0 268.3 C81.4 266.7 80.2 263.2 79.1 261.4 C77.9 259.6 76.6 258.1 76.1 257.5"/>
<path stroke="#ffb428" d="M145.8 247.0 C146.7 248.1 149.7 251.3 151.3 253.3 C152.9 255.3 155.0 257.0 155.5 258.8 C155.9 260.7 155.2 263.5 154.1 264.4 C152.9 265.3 150.2 265.3 148.5 264.4 C146.9 263.5 145.5 260.1 144.4 258.8 C143.2 257.6 142.8 256.9 141.6 256.8 C140.5 256.6 138.6 257.3 137.4 258.1 C136.3 259.0 135.1 261.0 134.7 261.6"/>
<path stroke="#f3ea6a" d="M97.9 143.3 C97.9 141.8 97.4 136.2 97.9 134.4 C98.4 132.6 99.3 131.8 100.8 132.4 C102.3 133.1 104.9 135.9 106.8 138.4 C108.6 140.8 110.8 145.3 111.7 147.3 C112.6 149.2 111.8 148.2 112.2 150.0 C112.6 151.8 113.8 154.9 114.3 158.3 C114.7 161.8 115.0 166.9 115.0 170.8 C115.0 174.7 113.9 178.4 114.3 181.9 C114.6 185.4 116.1 188.1 117.0 191.6 C118.0 195.1 119.5 199.2 119.8 202.7 C120.2 206.2 119.0 209.6 119.1 212.4 C119.2 215.2 119.3 216.9 120.5 219.3 C121.7 221.8 124.2 224.3 126.4 226.9 C128.5 229.6 130.7 232.9 133.3 235.3 C135.8 237.6 139.1 239.2 141.6 240.8 C144.2 242.4 145.8 243.3 148.5 245.0 C151.3 246.6 155.2 248.7 158.3 250.5 C161.3 252.4 164.3 254.4 166.6 256.1 C168.9 257.7 170.9 258.8 172.1 260.2 C173.4 261.6 174.7 263.2 174.2 264.4 C173.7 265.5 171.5 266.5 169.3 267.2 C167.2 267.9 163.3 267.9 161.0 268.5 C158.7 269.2 157.3 270.2 155.5 271.3 C153.6 272.5 151.8 275.1 149.9 275.5 C148.1 275.8 146.2 274.3 144.4 273.4 C142.5 272.5 140.7 270.6 138.8 269.9 C137.0 269.2 135.6 268.9 133.3 269.2 C131.0 269.6 127.7 271.2 125.0 272.0 C122.2 272.8 119.4 273.3 116.6 274.1 C113.9 274.9 111.1 276.1 108.3 276.9 C105.5 277.7 102.9 278.1 100.0 278.9 C97.1 279.8 92.8 280.8 90.9 282.2 C89.1 283.5 88.6 285.5 89.0 287.1 C89.3 288.8 91.3 290.8 92.9 292.1 C94.6 293.4 97.2 293.6 98.9 295.0 C100.5 296.5 102.3 298.3 102.8 301.0 C103.3 303.6 101.8 307.6 101.8 310.9 C101.8 314.1 103.0 317.8 102.8 320.7 C102.6 323.7 102.1 326.3 100.8 328.6 C99.5 331.0 97.2 332.7 94.9 334.6 C92.6 336.5 88.3 339.0 87.0 339.9"/>
<path stroke="#38e05a" d="M158.2 85.6 C159.6 86.7 164.7 90.1 166.4 92.2 C168.1 94.3 168.8 96.1 168.4 98.3 C168.1 100.6 166.4 102.8 164.3 105.5 C162.3 108.2 159.2 111.4 156.1 114.7 C153.1 118.1 149.3 122.2 146.3 125.5 C143.3 128.8 140.0 131.8 138.4 134.4 C136.7 137.1 136.4 138.2 136.4 141.3 C136.4 144.5 137.9 149.4 138.4 153.2 C138.9 157.0 138.5 159.8 139.2 163.9 C140.0 168.0 141.9 173.1 142.7 177.7 C143.5 182.4 144.2 187.0 144.1 191.6 C144.0 196.2 142.0 202.2 142.0 205.5 C142.0 208.7 142.6 209.5 144.1 211.0 C145.6 212.5 148.3 213.8 151.0 214.5 C153.8 215.2 158.3 214.6 160.7 215.2 C163.2 215.8 164.8 216.3 165.6 218.0 C166.4 219.6 165.0 223.0 165.6 224.9 C166.2 226.7 167.1 228.8 169.1 229.1 C171.0 229.3 173.9 227.9 177.4 226.3 C180.9 224.7 185.7 222.2 190.0 219.3 C194.3 216.5 199.3 212.1 203.3 209.0 C207.2 205.9 210.1 203.0 213.5 200.8 C216.9 198.6 220.7 196.6 223.8 195.7 C226.8 194.7 228.9 194.5 231.9 195.0 C235.0 195.5 238.8 197.5 242.2 198.7 C245.6 200.0 248.7 201.8 252.4 202.4 C256.2 203.0 260.6 202.7 264.7 202.4 C268.8 202.1 272.9 201.5 277.0 200.8 C281.1 200.1 285.4 199.1 289.3 198.3 C293.2 197.6 298.7 196.6 300.6 196.3"/>
<path stroke="#f3ea6a" d="M97.9 143.3 C98.4 145.3 100.9 152.2 100.8 155.2 C100.8 158.1 97.6 158.5 97.6 161.1 C97.7 163.7 99.4 168.0 101.1 170.8 C102.8 173.6 105.8 175.9 108.0 177.7 C110.2 179.6 113.2 181.2 114.3 181.9"/>
<path stroke="#f3ea6a" d="M124.5 88.1 C125.2 87.3 126.4 86.9 127.6 87.6 C128.7 88.3 130.4 90.5 131.6 92.2 C132.8 93.8 134.9 96.1 134.7 97.3 C134.5 98.5 132.1 99.5 130.6 99.3 C129.1 99.1 126.7 97.4 125.5 96.2 C124.3 95.1 123.6 93.5 123.5 92.2 C123.3 90.8 123.8 88.8 124.5 88.1Z"/>
<path stroke="#f3ea6a" d="M115.7 190.2 C114.2 190.7 109.5 191.6 106.6 193.0 C103.8 194.4 100.5 196.0 98.3 198.5 C96.1 201.1 94.7 204.8 93.5 208.3 C92.2 211.7 91.3 215.2 90.7 219.3 C90.1 223.5 90.1 230.9 90.0 233.2"/>
<path stroke="#f3ea6a" d="M299.7 257.5 C297.8 258.8 292.9 263.4 288.4 265.4 C283.9 267.4 277.8 268.3 272.6 269.3 C267.3 270.3 262.0 270.7 256.8 271.3 C251.5 272.0 246.2 272.6 240.9 273.3 C235.7 274.0 230.4 275.1 225.1 275.7 C219.9 276.3 213.5 276.4 209.3 276.8 C205.1 277.3 203.2 277.6 200.0 278.3 C196.8 278.9 193.4 280.1 190.2 281.0 C186.9 282.0 183.9 282.9 180.4 283.8 C177.0 284.7 172.6 285.4 169.3 286.6 C166.1 287.7 163.3 289.3 161.0 290.7 C158.7 292.1 157.6 293.9 155.5 294.9 C153.4 295.9 150.9 297.2 148.5 297.0 C146.2 296.7 143.7 294.9 141.6 293.5 C139.5 292.1 137.9 289.9 136.1 288.7 C134.2 287.4 132.4 286.5 130.5 285.9 C128.7 285.3 126.8 284.8 125.0 285.2 C123.1 285.5 120.8 286.6 119.4 288.0 C118.0 289.3 117.3 291.0 116.6 293.5 C116.0 296.1 116.1 298.4 115.3 303.2 C114.4 308.1 112.1 317.5 111.7 322.7 C111.3 327.9 112.5 331.7 112.7 334.6 C112.9 337.4 113.0 339.0 113.1 339.9"/>
<path stroke="#f3ea6a" d="M42.5 340.0 C42.3 341.6 42.0 346.6 41.5 349.9 C41.0 353.2 40.5 356.5 39.5 359.8 C38.6 363.1 37.6 367.0 35.6 369.7 C33.6 372.3 30.6 374.3 27.7 375.6 C24.7 376.9 20.8 377.4 17.8 377.6 C14.8 377.7 11.4 375.9 9.9 376.6 C8.4 377.2 8.2 379.9 8.9 381.5 C9.6 383.2 14.0 384.5 13.8 386.5 C13.7 388.4 10.2 391.6 7.9 393.4 C5.6 395.2 1.3 396.7 0.0 397.3"/>
<path stroke="#f3ea6a" d="M0.0 407.2 C1.3 406.6 5.3 404.9 7.9 403.3 C10.5 401.6 13.5 399.6 15.8 397.3 C18.1 395.0 19.4 391.6 21.7 389.4 C24.1 387.3 26.7 385.5 29.7 384.5 C32.6 383.5 36.2 383.8 39.5 383.5 C42.8 383.2 46.1 382.3 49.4 382.5 C52.7 382.7 56.0 383.7 59.3 384.5 C62.6 385.3 65.9 387.1 69.2 387.4 C72.5 387.8 76.1 387.1 79.1 386.5 C82.0 385.8 84.4 384.2 87.0 383.5 C89.6 382.8 92.6 381.5 94.9 382.5 C97.2 383.5 99.5 387.0 100.8 389.4 C102.1 391.9 102.3 395.0 102.8 397.3 C103.3 399.6 102.5 402.9 103.8 403.3 C105.1 403.6 108.9 401.9 110.7 399.3 C112.5 396.7 113.8 391.4 114.7 387.4 C115.5 383.5 116.0 379.5 115.7 375.6 C115.3 371.6 113.5 367.7 112.7 363.7 C111.9 359.8 110.7 355.8 110.7 351.9 C110.7 347.9 112.4 342.0 112.7 340.0"/>
<path stroke="#f3ea6a" d="M49.4 351.9 C50.6 349.2 54.0 347.1 57.3 345.9 C60.6 344.8 65.2 344.6 69.2 344.9 C73.2 345.3 77.8 346.1 81.1 347.9 C84.4 349.7 87.5 352.9 89.0 355.8 C90.4 358.8 90.9 362.7 90.0 365.7 C89.0 368.7 85.8 371.8 83.0 373.6 C80.2 375.4 76.4 376.4 73.2 376.6 C69.9 376.7 66.2 375.8 63.3 374.6 C60.3 373.4 57.5 371.8 55.4 369.7 C53.2 367.5 51.4 364.7 50.4 361.7 C49.4 358.8 48.3 354.5 49.4 351.9Z"/>
<path stroke="#f3ea6a" d="M57.3 357.8 C58.2 355.8 60.6 353.0 63.3 351.9 C65.9 350.7 70.2 350.2 73.2 350.9 C76.1 351.5 79.6 353.7 81.1 355.8 C82.5 358.0 82.7 361.4 82.0 363.7 C81.4 366.0 79.2 368.3 77.1 369.7 C75.0 371.0 71.7 371.8 69.2 371.6 C66.7 371.5 64.1 370.0 62.3 368.7 C60.5 367.3 59.1 365.5 58.3 363.7 C57.5 361.9 56.5 359.8 57.3 357.8Z"/>
<path stroke="#38e05a" d="M63.3 359.8 C63.6 358.5 66.4 357.3 68.2 356.8 C70.0 356.3 73.0 356.0 74.1 356.8 C75.3 357.6 75.6 360.3 75.1 361.7 C74.6 363.2 72.7 365.2 71.2 365.7 C69.7 366.2 67.5 365.7 66.2 364.7 C64.9 363.7 62.9 361.1 63.3 359.8Z"/>
<path stroke="#f3ea6a" d="M0.0 425.0 C1.3 424.0 5.3 421.1 7.9 419.1 C10.5 417.1 13.7 415.5 15.8 413.2 C18.0 410.8 19.3 407.9 20.8 405.2 C22.2 402.6 22.9 399.5 24.7 397.3 C26.5 395.2 28.8 393.5 31.6 392.4 C34.4 391.2 37.9 390.9 41.5 390.4 C45.1 389.9 51.4 389.6 53.4 389.4"/>
<path stroke="#f3ea6a" d="M29.7 427.0 C28.5 425.0 26.2 422.0 25.7 419.1 C25.2 416.1 25.4 412.2 26.7 409.2 C28.0 406.2 30.5 403.6 33.6 401.3 C36.7 399.0 41.2 396.7 45.5 395.4 C49.8 394.0 54.7 393.7 59.3 393.4 C63.9 393.1 68.9 392.9 73.2 393.4 C77.4 393.9 81.6 395.0 85.0 396.3 C88.5 397.7 91.9 399.1 93.9 401.3 C95.9 403.4 97.0 406.7 96.9 409.2 C96.7 411.7 95.2 414.6 92.9 416.1 C90.6 417.6 86.7 417.6 83.0 418.1 C79.4 418.6 74.8 418.3 71.2 419.1 C67.5 419.9 63.9 421.1 61.3 423.0 C58.7 425.0 57.7 429.0 55.4 430.9 C53.1 432.9 50.1 434.4 47.4 434.9 C44.8 435.4 42.0 434.6 39.5 433.9 C37.1 433.3 34.3 432.1 32.6 430.9 C31.0 429.8 30.8 429.0 29.7 427.0Z"/>
<path stroke="#f3ea6a" d="M37.6 425.0 C36.9 423.2 35.8 419.9 36.6 417.1 C37.4 414.3 39.7 410.8 42.5 408.2 C45.3 405.6 49.3 402.8 53.4 401.3 C57.5 399.8 62.6 399.5 67.2 399.3 C71.8 399.1 77.4 399.3 81.1 400.3 C84.7 401.3 87.6 403.4 89.0 405.2 C90.3 407.1 90.6 409.7 89.0 411.2 C87.3 412.7 82.7 413.3 79.1 414.1 C75.5 415.0 70.5 415.0 67.2 416.1 C63.9 417.3 61.6 419.1 59.3 421.1 C57.0 423.0 55.5 426.5 53.4 428.0 C51.2 429.5 48.6 430.0 46.5 430.0 C44.3 430.0 42.0 428.8 40.5 428.0 C39.0 427.2 38.2 426.8 37.6 425.0Z"/>
<path stroke="#ffb428" d="M46.5 423.0 C45.8 421.7 44.6 420.1 45.5 418.1 C46.3 416.1 48.8 413.2 51.4 411.2 C54.0 409.2 57.7 407.2 61.3 406.2 C64.9 405.2 69.5 405.1 73.2 405.2 C76.8 405.4 82.0 406.4 83.0 407.2 C84.0 408.0 81.7 409.4 79.1 410.2 C76.4 411.0 70.5 411.0 67.2 412.2 C63.9 413.3 61.6 415.1 59.3 417.1 C57.0 419.1 55.0 422.5 53.4 424.0 C51.7 425.5 50.6 426.2 49.4 426.0 C48.3 425.8 47.1 424.4 46.5 423.0Z"/>
<path stroke="#f3ea6a" d="M50.4 419.1 C50.7 417.9 54.0 414.8 55.4 414.1 C56.7 413.5 58.7 414.0 58.3 415.1 C58.0 416.3 54.7 420.4 53.4 421.1 C52.1 421.7 50.1 420.2 50.4 419.1Z"/>
<path stroke="#38e05a" d="M0.0 437.9 C1.6 437.0 6.6 434.7 9.9 432.9 C13.2 431.1 17.3 429.3 19.8 427.0 C22.2 424.7 23.9 422.4 24.7 419.1 C25.5 415.8 23.9 410.5 24.7 407.2 C25.5 403.9 27.7 401.1 29.7 399.3 C31.6 397.5 35.1 396.3 36.6 396.3 C38.1 396.3 39.0 397.8 38.6 399.3 C38.1 400.8 34.9 402.6 33.6 405.2 C32.3 407.9 31.1 411.8 30.6 415.1 C30.1 418.4 30.0 422.0 30.6 425.0 C31.3 428.0 32.8 430.6 34.6 432.9 C36.4 435.2 39.0 437.4 41.5 438.9 C44.0 440.3 46.8 441.8 49.4 441.8 C52.1 441.8 55.0 440.3 57.3 438.9 C59.6 437.4 61.6 434.9 63.3 432.9 C64.9 430.9 65.2 428.5 67.2 427.0 C69.2 425.5 72.2 424.5 75.1 424.0 C78.1 423.5 81.7 424.2 85.0 424.0 C88.3 423.9 92.3 422.5 94.9 423.0 C97.5 423.5 98.9 425.3 100.8 427.0 C102.8 428.6 104.5 430.9 106.8 432.9 C109.1 434.9 112.2 437.0 114.7 438.9 C117.1 440.7 119.3 443.8 121.6 443.8 C123.9 443.8 126.4 440.8 128.5 438.9 C130.6 436.9 133.5 435.2 134.4 431.9 C135.4 428.6 135.1 424.5 134.4 419.1 C133.8 413.6 131.8 405.9 130.5 399.3 C129.2 392.7 127.8 386.1 126.5 379.5 C125.2 373.0 123.7 365.7 122.6 359.8 C121.4 353.8 120.1 346.6 119.6 344.0"/>
<path stroke="#f3ea6a" d="M0.0 448.7 C2.0 448.6 7.9 447.9 11.9 447.7 C15.8 447.6 20.8 446.9 23.7 447.7 C26.7 448.6 28.2 450.5 29.7 452.7 C31.1 454.8 32.3 458.1 32.6 460.6 C33.0 463.1 31.8 466.7 31.6 467.9"/>
<path stroke="#f3ea6a" d="M42.5 467.9 C42.5 465.0 41.4 454.1 42.5 450.7 C43.7 447.4 47.0 448.7 49.4 447.7 C51.9 446.8 54.7 446.3 57.3 444.8 C60.0 443.3 62.9 440.8 65.2 438.9 C67.5 436.9 69.2 434.2 71.2 432.9 C73.2 431.6 74.5 430.9 77.1 430.9 C79.7 430.9 84.4 431.6 87.0 432.9 C89.6 434.2 90.9 436.9 92.9 438.9 C94.9 440.8 96.5 443.0 98.9 444.8 C101.2 446.6 104.1 448.1 106.8 449.7 C109.4 451.4 112.4 453.5 114.7 454.7 C117.0 455.8 118.3 457.0 120.6 456.6 C122.9 456.3 125.9 454.3 128.5 452.7 C131.1 451.0 134.1 448.7 136.4 446.8 C138.7 444.8 140.9 443.1 142.3 440.8 C143.8 438.5 144.7 435.6 145.3 432.9 C146.0 430.3 145.5 426.7 146.3 425.0 C147.1 423.4 148.8 423.4 150.3 423.0 C151.7 422.7 154.2 423.0 155.0 423.0"/>
<path stroke="#f3ea6a" d="M150.0 424.0 C151.0 423.9 154.3 423.9 155.9 423.0 C157.6 422.2 159.1 421.1 159.9 419.1 C160.7 417.1 159.9 414.1 160.9 411.2 C161.9 408.2 163.7 404.6 165.8 401.3 C168.0 398.0 170.8 393.9 173.7 391.4 C176.7 388.9 180.3 387.1 183.6 386.5 C186.9 385.8 189.9 386.3 193.5 387.4 C197.1 388.6 201.4 391.2 205.4 393.4 C209.3 395.5 213.6 398.2 217.2 400.3 C220.8 402.4 224.3 405.4 227.1 406.2 C229.9 407.1 232.4 407.1 234.0 405.2 C235.7 403.4 236.0 399.6 237.0 395.4 C238.0 391.1 239.0 384.8 240.0 379.5 C240.9 374.3 242.1 367.0 242.9 363.7 C243.7 360.4 244.2 359.4 244.9 359.8 C245.6 360.1 246.3 362.7 247.3 365.7 C248.3 368.7 249.2 373.3 250.8 377.6 C252.4 381.8 254.1 386.1 256.8 391.4 C259.4 396.7 263.4 403.6 266.6 409.2 C269.9 414.8 273.6 420.4 276.5 425.0 C279.5 429.6 283.0 433.3 284.4 436.9 C285.9 440.5 286.4 443.8 285.4 446.8 C284.4 449.7 281.3 452.0 278.5 454.7 C275.7 457.3 271.4 460.6 268.6 462.6 C265.8 464.6 262.9 465.9 261.7 466.5"/>
<path stroke="#f3ea6a" d="M38.6 535.2 C39.5 533.9 43.0 530.3 44.5 527.3 C46.0 524.3 47.1 520.7 47.4 517.4 C47.8 514.1 47.3 510.2 46.5 507.5 C45.6 504.9 43.3 503.9 42.5 501.6 C41.7 499.3 41.0 496.2 41.5 493.7 C42.0 491.2 43.2 488.7 45.5 486.8 C47.8 484.9 51.7 483.2 55.4 482.2 C59.0 481.2 63.6 481.1 67.2 480.9 C70.8 480.6 74.1 480.2 77.1 480.9 C80.1 481.5 82.9 483.2 85.0 484.8 C87.2 486.5 88.8 488.9 90.0 490.7 C91.1 492.5 90.8 494.5 91.9 495.7 C93.1 496.8 94.7 496.2 96.9 497.7 C99.0 499.1 101.8 501.9 104.8 504.6 C107.7 507.2 111.9 511.2 114.7 513.5 C117.5 515.8 118.3 517.9 121.6 518.4 C124.9 518.9 130.3 517.2 134.4 516.4 C138.6 515.7 142.9 514.5 146.3 513.9 C149.7 513.2 153.6 512.7 155.0 512.5"/>
<path stroke="#f3ea6a" d="M28.7 472.0 C29.5 471.6 31.5 470.6 33.6 470.0 C35.8 469.3 40.2 468.3 41.5 468.0"/>
<path stroke="#f3ea6a" d="M116.6 475.9 C118.8 475.3 128.0 475.2 130.5 475.9 C133.0 476.6 133.6 479.3 131.5 479.9 C129.3 480.5 120.1 480.1 117.6 479.5 C115.2 478.8 114.5 476.5 116.6 475.9Z"/>
<path stroke="#f3ea6a" d="M150.0 513.1 C152.0 512.5 157.2 511.0 161.9 509.9 C166.5 508.8 172.4 507.3 177.7 506.6 C183.0 505.8 186.9 505.5 193.5 505.2 C200.1 504.8 209.6 504.7 217.2 504.6 C224.8 504.4 232.4 504.3 239.0 504.2 C245.6 504.1 253.1 503.6 256.8 504.0 C260.4 504.4 258.7 506.4 260.7 506.6 C262.7 506.8 264.7 505.5 268.6 505.2 C272.6 504.8 279.3 504.7 284.4 504.6 C289.6 504.4 297.1 504.2 299.7 504.2"/>
<path stroke="#f3ea6a" d="M260.7 468.0 C261.4 468.4 261.7 469.9 264.7 470.4 C267.6 470.9 272.7 470.7 278.5 471.0 C284.3 471.2 296.1 471.8 299.7 472.0"/>
<path stroke="#f3ea6a" d="M289.4 484.8 C289.2 483.8 290.6 482.4 292.3 481.8 C294.1 481.3 298.4 480.5 299.7 481.4 C300.9 482.4 300.7 486.7 299.7 487.8 C298.6 488.9 295.0 488.7 293.3 488.2 C291.6 487.7 289.5 485.9 289.4 484.8Z"/>
<path stroke="#38e05a" d="M490.3 85.1 C489.8 88.2 488.1 97.2 486.9 103.7 C485.8 110.2 484.2 117.9 483.6 124.1 C482.9 130.3 482.2 135.9 482.9 141.0 C483.6 146.1 486.7 150.6 487.6 154.6 C488.6 158.5 489.0 161.6 488.6 164.7 C488.2 167.9 486.4 171.2 485.3 173.2 C484.1 175.2 482.4 176.0 481.9 176.6"/>
<path stroke="#f3ea6a" d="M499.8 86.1 C500.2 88.5 501.2 95.7 502.2 100.3 C503.2 105.0 504.3 110.2 505.6 113.9 C506.9 117.6 509.3 121.0 510.0 122.4"/>
<path stroke="#f3ea6a" d="M510.7 132.5 C510.1 131.4 509.3 127.1 507.3 125.8 C505.3 124.5 501.4 124.2 498.8 124.7 C496.3 125.3 493.3 126.4 492.0 129.2 C490.7 131.9 490.6 136.8 491.0 141.0 C491.4 145.3 493.7 150.1 494.4 154.6 C495.1 159.1 495.8 163.6 495.4 168.1 C495.0 172.7 493.2 177.2 492.0 181.7 C490.9 186.2 489.8 191.0 488.6 195.3 C487.5 199.5 486.4 204.6 485.3 207.1 C484.1 209.7 482.4 209.9 481.9 210.5"/>
<path stroke="#f3ea6a" d="M515.8 254.6 C514.9 254.9 512.0 255.4 510.7 256.3 C509.4 257.1 507.7 258.2 508.0 259.7 C508.2 261.1 511.4 263.2 512.4 264.7 C513.4 266.3 513.8 268.4 514.1 269.2"/>
<path stroke="#f3ea6a" d="M481.9 278.3 C482.4 279.7 484.1 284.0 485.3 286.8 C486.4 289.6 488.4 293.1 488.6 295.3 C488.9 297.5 487.2 299.2 486.9 300.0"/>
<path stroke="#f3ea6a" d="M486.9 293.4 C487.1 295.1 487.9 300.6 487.6 303.6 C487.3 306.5 486.2 309.4 485.3 311.0 C484.3 312.6 482.4 312.7 481.9 313.1"/>
<path stroke="#f3ea6a" d="M520.8 352.7 C520.4 354.1 518.2 358.4 518.1 361.2 C518.0 364.0 519.8 368.2 520.2 369.7"/>
</g>
</svg>
<div id="title" class="abs"><span>g]</span></div>
<div id="menubar" class="abs">
<i class="act"></i>
<span style="left:1.5px">土地利用(L)</span>
<span style="left:80px">等高线(S)</span>
<span style="left:146px">地物编辑(A)</span>
<span style="left:226px">检查入库(G)</span>
<span style="left:307px">工程应用(C)</span>
<span style="left:387.5px">图幅管理(M)</span>
<span style="left:472px">凉</span>
</div>
<div id="tb1" class="abs">
<svg width="301" height="29" viewBox="0 55 301 29" style="position:absolute;left:0;top:0">
<!-- save -->
<rect x="-2" y="62" width="14.5" height="14.500" rx="1" fill="#3b3f55"/><rect x="1.500" y="62.500" width="8" height="5.500" fill="#f2f2f6"/><rect x="2.500" y="71" width="6.500" height="5.500" fill="#a4a6b6"/><rect x="3.500" y="72" width="2" height="3.500" fill="#3b3f55"/>
<rect x="20" y="61" width="1.2" height="19" fill="#8a8a90"/>
<!-- pencil -->
<path d="M28 71c0 5 6 5 8 1l7-10" fill="none" stroke="#3a3a48" stroke-width="1.6"/><path d="M36 71l6-9" stroke="#e2a93a" stroke-width="3"/><path d="M33 77h9" stroke="#aaa" stroke-width="1"/>
<!-- cloud hand -->
<path d="M52 70c1-4 5-5 8-4 4 0 6 3 6 6 0 4-4 5-8 5-4 0-6-2-6-4z" fill="#d6d6da" stroke="#55555f" stroke-width="1.2"/><path d="M62 65h6M65 62v6" stroke="#222" stroke-width="1.8"/>
<!-- zoom1 -->
<circle cx="80.500" cy="68" r="5.600" fill="#f4f6fa" stroke="#4a4d58" stroke-width="1.500"/><path d="M84.500 72.500l5 5.500" stroke="#3a3d48" stroke-width="2.600"/>
<!-- zoom2 -->
<circle cx="104" cy="68" r="5.600" fill="#f4f6fa" stroke="#4a4d58" stroke-width="1.500"/><path d="M108 72.500l5 5.500" stroke="#3a3d48" stroke-width="2.600"/><rect x="101.500" y="65.500" width="5" height="5" fill="none" stroke="#555" stroke-width="1"/>
<!-- zoom3 -->
<circle cx="127.500" cy="68" r="5.600" fill="#f4f6fa" stroke="#4a4d58" stroke-width="1.500"/><path d="M131.500 72.500l5 5.500" stroke="#3a3d48" stroke-width="2.600"/><path d="M125.500 66l4 4M129.500 66l-4 4" stroke="#444" stroke-width="1.200" stroke-dasharray="1.500 1.500"/>
<!-- zoom4 -->
<path d="M156 64.500a5.600 5.600 0 1 0 1 6" fill="none" stroke="#4a4d58" stroke-width="1.400"/><path d="M155.500 72.500l5 5.500" stroke="#3a3d48" stroke-width="2.600"/><path d="M154 66c3 0 5 2 5 5" fill="none" stroke="#333" stroke-width="1.300"/><path d="M152.500 66l3-2.500v5z" fill="#222"/>
<rect x="167" y="61" width="1.200" height="19" fill="#8a8a90"/>
<!-- undo -->
<path d="M190.500 63.500c-5-2-11 1-11.500 8" fill="none" stroke="#263a7a" stroke-width="3"/><path d="M174.500 69.500l9.500 1-6 7z" fill="#263a7a"/>
<path d="M200 69h5l-2.500 3z" fill="#1a2050"/>
<!-- redo -->
<path d="M212 63.500c5-2 10 1 10.500 8" fill="none" stroke="#c2c4c8" stroke-width="3"/><path d="M226.500 69.500l-9 1 5.500 7z" fill="#c2c4c8"/>
<path d="M237 69h5l-2.500 3z" fill="#b0b0b8"/>
<rect x="248" y="61" width="1.200" height="19" fill="#8a8a90"/>
<!-- icon A -->
<rect x="256.500" y="62.500" width="13" height="15.500" rx="1" fill="#eef0f4" stroke="#5a5e6a" stroke-width="1.200"/><rect x="258.500" y="64.500" width="6" height="6" fill="#3458a8"/><rect x="259" y="73.500" width="7" height="1.500" fill="#555"/>
<!-- icon B -->
<rect x="279" y="62.500" width="16" height="15.500" rx="1" fill="#e6e7ea" stroke="#7a7c86" stroke-width="1.200"/><path d="M284 63v15M289.500 63v15M279 68h16M279 73h16" stroke="#8a8c96" stroke-width="1"/><rect x="286" y="74" width="5" height="3" fill="#fff" stroke="#666" stroke-width=".8"/>
</svg>
</div>
<div id="tb2" class="abs">
<svg width="303" height="29" viewBox="481 55 303 29" style="position:absolute;left:0;top:0">
<!-- new -->
<path d="M479 64h7l4.500 4v10h-11.500z" fill="#fbfbfd" stroke="#555862" stroke-width="1.200"/><path d="M486 64v4h4.500" fill="none" stroke="#555862" stroke-width="1"/>
<!-- open -->
<path d="M498 77v-11h5l1.500 2h7v2" fill="#f4f4f6" stroke="#4a4d58" stroke-width="1.300"/><path d="M498 77l3-7h13.500l-3 7z" fill="#e9e9ee" stroke="#4a4d58" stroke-width="1.300"/>
<!-- save -->
<rect x="522.500" y="63" width="14.500" height="14.500" rx="1" fill="#3b3f55"/><rect x="525.500" y="63.500" width="8.500" height="5.500" fill="#f2f2f6"/><rect x="526.500" y="72" width="6.500" height="5.500" fill="#a4a6b6"/><rect x="527.500" y="73" width="2" height="3.500" fill="#3b3f55"/>
<rect x="543.500" y="61" width="1.200" height="19" fill="#8a8a90"/>
<!-- printer -->
<rect x="554" y="63" width="10" height="5" fill="#fafafa" stroke="#4a4d58" stroke-width="1.100"/><rect x="551" y="67.500" width="16.500" height="7" rx="2" fill="#e4e5ea" stroke="#3f424c" stroke-width="1.300"/><rect x="554" y="73" width="10" height="4.500" fill="#fff" stroke="#4a4d58" stroke-width="1.100"/>
<!-- preview -->
<rect x="575" y="62.500" width="12" height="14" fill="#f4f6fa" stroke="#5a6e9a" stroke-width="1.100"/><circle cx="583" cy="69" r="4.500" fill="#bcd6f2" stroke="#4a5a78" stroke-width="1.200"/><path d="M579.500 73l-3 4.500" stroke="#c89a3a" stroke-width="2.200"/>
<!-- plot -->
<rect x="601" y="63" width="9" height="5" fill="#fafafa" stroke="#4a4d58" stroke-width="1.100"/><rect x="598.500" y="67.500" width="14.500" height="6.500" rx="2" fill="#e4e5ea" stroke="#3f424c" stroke-width="1.300"/><rect x="601" y="73" width="6" height="4" fill="#fff" stroke="#4a4d58" stroke-width="1"/><path d="M606 76h5v-2l3.500 3-3.500 3v-2h-5z" fill="#2a5ab8"/>
<rect x="620.500" y="61" width="1.200" height="19" fill="#8a8a90"/>
<!-- scissors -->
<path d="M630 63l10 12M642 63l-10 12" stroke="#3a3d48" stroke-width="1.700"/><circle cx="631" cy="76.500" r="2" fill="none" stroke="#3a4a8a" stroke-width="1.300"/><circle cx="641" cy="76.500" r="2" fill="none" stroke="#3a4a8a" stroke-width="1.300"/>
<!-- copy -->
<rect x="652.500" y="63" width="9" height="11" fill="#fbfbfd" stroke="#4a4d58" stroke-width="1.200"/><rect x="657" y="67" width="10" height="11" fill="#fbfbfd" stroke="#4a4d58" stroke-width="1.200"/>
<!-- paste -->
<rect x="676" y="63.500" width="11" height="13.500" rx="1" fill="#8a8d98" stroke="#4a4d58" stroke-width="1.200"/><rect x="679" y="62" width="5" height="3" fill="#555"/><rect x="682" y="67.500" width="9.500" height="10.500" fill="#fbfbfd" stroke="#4a4d58" stroke-width="1.200"/>
<!-- matchprop -->
<rect x="699" y="62.500" width="14.500" height="14.500" fill="#f0f2f6" stroke="#5a5e6a" stroke-width="1.200"/><rect x="700.500" y="64" width="7" height="7" fill="#2f55a5"/><path d="M706 76l8-5" stroke="#d8902a" stroke-width="2.600"/><circle cx="713" cy="73" r="2" fill="#a8601a"/>
<rect x="721.500" y="61" width="1.200" height="19" fill="#8a8a90"/>
<!-- undo -->
<path d="M745 63.500c-5-2-11 1-11.500 8" fill="none" stroke="#263a7a" stroke-width="3"/><path d="M729 69.500l9.500 1-6 7z" fill="#263a7a"/>
<path d="M753.500 69h5l-2.500 3z" fill="#1a2050"/>
<!-- redo -->
<path d="M766 63.500c5-2 10 1 10.500 8" fill="none" stroke="#c8cace" stroke-width="3"/><path d="M780.500 69.500l-9 1 5.500 7z" fill="#c8cace"/>
</svg>
</div>
<div id="anno" class="abs">
<svg width="298" height="44" viewBox="486 13 298 44" fill="none" stroke="#4a4a4a" stroke-width="1.500" stroke-linecap="round" stroke-linejoin="round">
<!-- pencil -->
<path d="M499 39.500l1-4 8.500-8.500 3 3-8.500 8.500z"/><path d="M506.500 29l3 3"/>
<!-- square -->
<rect x="526.500" y="27" width="14" height="13"/>
<!-- circle -->
<circle cx="562.500" cy="33.500" r="7"/>
<!-- arrow -->
<path d="M585 40.500l13.500-13.500M590.500 27h8v8"/>
<!-- A -->
<text x="619.700" y="40.700" text-anchor="middle" font-family="Liberation Sans, sans-serif" font-size="21.500" fill="#4a4a4a" stroke="none">A</text>
<!-- wand -->
<path d="M642 40l9-9 2 2-9 9z"/><path d="M653 25v2.500M656.500 27l-1.500 1.500M658 31h-2.500M649 27l1.500 1.500" stroke-width="1.200"/>
<path d="M668.500 25v17" stroke="#c8c8cc" stroke-width="1"/>
<!-- undo circle -->
<path d="M684 28v5h5"/><path d="M684.500 33a7 7 0 1 1 1.500 5.500"/>
<!-- trash -->
<path d="M712 29h14M716 29v-2.500h6v2.500M713.500 29l1 12h9l1-12M717.500 32.500v5.500M720.500 32.500v5.500"/>
<path d="M740.500 25v17" stroke="#c8c8cc" stroke-width="1"/>
<!-- speaker -->
<path d="M764 30.500h4l5-4v14l-5-4h-4z"/><path d="M776 30a4 4 0 0 1 0 7"/><path d="M778.500 27.500a7.500 7.500 0 0 1 0 12"/>
</svg>
</div>
<div id="menu" class="abs">
<div class="mi" style="top:2.8px"><svg class="ic" viewBox="0 0 16 16"><path d="M2.5 2v11.5h12" fill="none" stroke="#2c4f96" stroke-width="1.5"/><path d="M0.8 4l1.7-3 1.7 3zM12.5 11.800l3 1.700-3 1.700z" fill="#2c4f96"/><path d="M2.500 13.500L8 6.500" stroke="#3b62b0" stroke-width="1.300"/><circle cx="8.500" cy="4" r="3.300" fill="#cfe2f6" stroke="#5f86c4" stroke-width="1.100"/><path d="M6.500 5.500l4-3" stroke="#5f86c4" stroke-width="1"/><path d="M11 6.500l3.500 3" stroke="#c8a878" stroke-width="1.500"/></svg><span>查询指定点坐标</span></div>
<div class="mi" style="top:23.2px"><svg class="ic" viewBox="0 0 16 16"><rect x="0" y="3" width="3" height="3" fill="#2c4f96"/><rect x="13" y="3" width="3" height="3" fill="#2c4f96"/><path d="M4 4.500h8" stroke="#3b62b0" stroke-width="1.400" stroke-dasharray="1.600 1.300"/><rect x="0" y="8.500" width="16" height="4" fill="#c99832"/><path d="M2.500 8.500v2M5.500 8.500v2M8.500 8.500v2M11.500 8.500v2M14 8.500v2" stroke="#8a6418" stroke-width=".8"/></svg><span>查询两点距离及方位</span></div>
<div class="mi" style="top:43.6px"><span>查询线长</span></div>
<div class="mi" style="top:64.0px"><svg class="ic" viewBox="0 0 16 16"><rect x="0" y="1" width="16" height="15" fill="#d9dde1"/><rect x="1" y="8" width="7" height="7.500" fill="#4b82c8" stroke="#1d3f7a" stroke-width="1.400"/><circle cx="9.500" cy="5" r="3.800" fill="#c6e2f4" stroke="#6a8aa8" stroke-width="1.100"/><path d="M12 8l3.500 4.500" stroke="#666" stroke-width="1.700"/></svg><span>查询实体面积</span></div>
<div class="mi" style="top:84.4px"><span>计算表面积</span><i class="arr"></i></div>
<div class="sep" style="top:109.0px"></div>
<div class="mi" style="top:114.2px"><span>生成里程文件</span><i class="arr"></i></div>
<div class="sep" style="top:138.8px"></div>
<div class="mi" style="top:144.0px"><span>DTM法土方计算</span><i class="arr"></i></div>
<div class="mi" style="top:164.4px"><span>断面法土方计算</span><i class="arr"></i></div>
<div class="mi" style="top:184.8px"><svg class="ic" viewBox="0 0 16 16"><rect x="0.500" y="1" width="15.500" height="14.500" fill="#dde9f1"/><path d="M1.500 13.500l5-6 2 1.500 1.500-1.500 5 6z" fill="#2b6688"/><path d="M5.500 7c-1.500-3 1-5 3-4 1-2.500 4-2 4 .5 0 2-2 2.500-3 2 0 1.500-2.500 2.500-4 1.500z" fill="#7a7ae0"/><path d="M10 1.500c2-.8 3.500.5 3 2" fill="none" stroke="#4c4cc8" stroke-width="1.100"/></svg><span>方格网法土方计算</span></div>
<div class="mi" style="top:205.2px"><svg class="ic" viewBox="0 0 16 16"><rect x="0.500" y="1" width="15.500" height="14.500" fill="#dde9f1"/><path d="M1.500 13.500l5-6 2 1.500 1.500-1.500 5 6z" fill="#2b6688"/><path d="M5.500 7c-1.500-3 1-5 3-4 1-2.500 4-2 4 .5 0 2-2 2.500-3 2 0 1.500-2.500 2.500-4 1.500z" fill="#7a7ae0"/><path d="M10 1.500c2-.8 3.500.5 3 2" fill="none" stroke="#4c4cc8" stroke-width="1.100"/></svg><span>等高线法土方计算</span></div>
<div class="mi" style="top:225.6px"><span>区域土方量平衡</span><i class="arr"></i></div>
<div class="sep" style="top:250.2px"></div>
<div class="mi" style="top:255.4px"><span>绘 断 面 图</span><i class="arr"></i></div>
<div class="sep" style="top:280.0px"></div>
<div class="mi" style="top:285.2px"><span>公路曲线设计</span><i class="arr"></i></div>
<div class="sep" style="top:309.8px"></div>
<div class="mi" style="top:315.0px"><svg class="ic" viewBox="0 0 16 16"><rect x="0" y="1" width="16" height="14.500" fill="#6b96cc"/><path d="M9 3h7v9h-7z" fill="#cfd6e2"/><path d="M13 1.500h3v7h-3z" fill="#1d2f6a"/><path d="M1 3.500h7M1 6h6" stroke="#dbe7f5" stroke-width="1.200"/><path d="M0.500 10c2 5 12 5 14.500 0" fill="none" stroke="#16305e" stroke-width="2.200"/><path d="M2 10c3 2 8 2 11 0" fill="none" stroke="#8fb2dc" stroke-width="1"/></svg><span>计算指定范围的面积</span></div>
<div class="mi" style="top:335.4px"><svg class="ic" viewBox="0 0 16 16"><rect x="0" y="1" width="16" height="8" fill="#5d8ecb"/><path d="M1 3.500h6M1 6h5" stroke="#dbe7f5" stroke-width="1.200"/><rect x="0" y="9" width="16" height="4.500" fill="#1f6a42"/><rect x="0" y="13.500" width="16" height="2" fill="#16305e"/><path d="M4.500 12.500L12.500 2.500" stroke="#e5aa35" stroke-width="2.800"/><path d="M3.500 14l1.800-3 1.500 1.200z" fill="#333"/><path d="M11.500 3.500l2-2.500 1.500 1.200-2 2.500z" fill="#c0504a"/></svg><span>统计指定区域的面积</span></div>
<div class="mi" style="top:355.8px"><svg class="ic" viewBox="0 0 16 16"><rect x="0" y="1" width="16" height="14.500" fill="#4c98e6"/><rect x="0" y="1" width="16" height="4" fill="#9cc6ee"/><path d="M2 8.500h1.500M5.500 7h1.500M9 5.500h1.500M12.500 4h1.500M3 11.500h1.500M7 10.500h1.500M11 9.500h1.500M13.500 12h1.500" stroke="#eaf4ff" stroke-width="1.400"/></svg><span>指定点所围成的面积</span></div>
<div class="sep" style="top:380.4px"></div>
<div class="mi" style="top:385.6px"><svg class="ic" viewBox="0 0 16 16"><text x="0.500" y="10.800" font-family="Liberation Sans, sans-serif" font-weight="bold" font-size="12.500" fill="#1f2f74">L</text><path d="M8 10.500l5.500-8.500" stroke="#d9a13a" stroke-width="2.800"/><path d="M7 12l1.700-3 1.600 1.200z" fill="#333"/><rect x="0" y="11.800" width="16" height="1.200" fill="#b0b0b0"/><rect x="0" y="13.300" width="16" height="2.200" fill="#111"/></svg><span>线条长度调整</span></div>
<div class="mi" style="top:406.0px"><span>面积调整</span><i class="arr"></i></div>
<div class="sep" style="top:430.6px"></div>
<div class="mi" style="top:435.8px"><svg class="ic" viewBox="0 0 16 16"><circle cx="3" cy="3.500" r="2.300" fill="#3a9a5c" stroke="#1d3a5a" stroke-width="1"/><path d="M3 6v7.500h3" fill="none" stroke="#2a4a9a" stroke-width="1.500"/><rect x="6.500" y="4.500" width="9" height="11" rx="1.200" fill="#f6f6f6" stroke="#1d2f5a" stroke-width="1.400"/><path d="M9.500 5.500v9M12.500 5.500v9M7 8.500h8M7 11.500h8" stroke="#39415a" stroke-width="1"/></svg><span>指定点生成数据文件</span></div>
<div class="mi hl" style="top:456.2px"><span>高程点生成数据文件</span><i class="arr"></i></div>
<div class="mi" style="top:476.6px"><span>控制点生成数据文件</span></div>
<div class="mi" style="top:497.0px"><svg class="ic" viewBox="0 0 16 16"><path d="M1 6.500l4.500 3-4.500 4" fill="none" stroke="#3a4ac0" stroke-width="1.700"/><path d="M1 9l5-5" stroke="#3a4ac0" stroke-width="1.300"/><circle cx="4.500" cy="3" r="2.200" fill="#b855a8"/><rect x="6.500" y="6" width="9" height="9.500" rx="1.200" fill="#3556a4" stroke="#17285e" stroke-width="1.300"/><rect x="8.500" y="9" width="5" height="3.500" fill="#eef2fa"/></svg><span>等高线生成数据文件</span></div>
</div>
<div id="sub" class="abs">
<div class="mi" style="top:2px"><svg class="ic" viewBox="0 0 16 16"><circle cx="3" cy="4" r="2" fill="#fff" stroke="#234" stroke-width="1.2"/><circle cx="3" cy="9" r="1.6" fill="#3a6ab0"/><path d="M3 6v8h3" fill="none" stroke="#2a4a9a" stroke-width="1.3"/><rect x="6.5" y="3" width="9" height="11" rx="1" fill="#f4f4f4" stroke="#223a6a" stroke-width="1.3"/><path d="M9.5 4v9M12.5 4v9M7 7h8M7 10h8" stroke="#445" stroke-width="1"/></svg><span>有编码高程点</span></div>
<div class="mi hl" style="top:22.8px;right:3px"><svg class="ic" viewBox="0 0 16 16"><circle cx="3" cy="4" r="2" fill="#dfe8ff" stroke="#dfe8ff" stroke-width="1"/><circle cx="3" cy="10" r="2" fill="none" stroke="#dfe8ff" stroke-width="1.2"/><rect x="6.5" y="3" width="9" height="11" rx="1" fill="#eef2fa" stroke="#1d2f5a" stroke-width="1.3"/><path d="M9.5 4v9M12.5 4v9M7 7h8M7 10h8" stroke="#345" stroke-width="1"/></svg><span>无编码高程点</span></div>
<div class="mi" style="top:44px"><span>无编码水深点</span></div>
</div>
<svg id="wm" class="abs" style="left:0;top:0;pointer-events:none" width="784" height="649" viewBox="0 0 784 649" fill="#ffffff" fill-opacity="0.16">
<defs><clipPath id="cm"><rect x="92" y="0" width="620.5" height="649"/></clipPath><clipPath id="cl"><rect x="0" y="0" width="87" height="649"/></clipPath><clipPath id="cr"><rect x="719.500" y="0" width="70" height="649"/></clipPath></defs>
<g clip-path="url(#cm)">
<text transform="translate(18.2 75.4) rotate(-44)">大水牛测绘</text>
<text transform="translate(160.2 75.4) rotate(-44)">大水牛测绘</text>
<text transform="translate(301.8 75.4) rotate(-44)">大水牛测绘</text>
<text transform="translate(443.2 75.4) rotate(-44)">大水牛测绘</text>
<text transform="translate(585.2 75.4) rotate(-44)">大水牛测绘</text>
<text transform="translate(727.2 75.4) rotate(-44)">大水牛测绘</text>
<text transform="translate(10.2 310.4) rotate(-44)">大水牛测绘</text>
<text transform="translate(151.2 310.4) rotate(-44)">大水牛测绘</text>
<text transform="translate(292.2 310.4) rotate(-44)">大水牛测绘</text>
<text transform="translate(433.2 310.4) rotate(-44)">大水牛测绘</text>
<text transform="translate(574.2 310.4) rotate(-44)">大水牛测绘</text>
<text transform="translate(715.2 310.4) rotate(-44)">大水牛测绘</text>
<text transform="translate(124.2 565.4) rotate(-44)">大水牛测绘</text>
<text transform="translate(263.2 565.4) rotate(-44)">大水牛测绘</text>
<text transform="translate(403.2 565.4) rotate(-44)">大水牛测绘</text>
<text transform="translate(543.2 565.4) rotate(-44)">大水牛测绘</text>
<text transform="translate(684.2 565.4) rotate(-44)">大水牛测绘</text>
<text transform="translate(93.2 800.4) rotate(-44)">大水牛测绘</text>
<text transform="translate(233.2 800.4) rotate(-44)">大水牛测绘</text>
<text transform="translate(378.2 800.4) rotate(-44)">大水牛测绘</text>
<text transform="translate(518.2 800.4) rotate(-44)">大水牛测绘</text>
<text transform="translate(658.2 800.4) rotate(-44)">大水牛测绘</text>
<text transform="translate(803.2 800.4) rotate(-44)">大水牛测绘</text>
</g>
<g clip-path="url(#cl)">
<text transform="translate(102.2 75.4) rotate(-44)">大水牛测绘</text>
<text transform="translate(84.2 310.4) rotate(-44)">大水牛测绘</text>
<text transform="translate(57.2 565.4) rotate(-44)">大水牛测绘</text>
<text transform="translate(33.2 800.4) rotate(-44)">大水牛测绘</text>
</g>
<g clip-path="url(#cr)">
<text transform="translate(788.2 73.4) rotate(-44)">大水牛测绘</text>
<text transform="translate(774.2 315.4) rotate(-44)">大水牛测绘</text>
<text transform="translate(754.2 575.4) rotate(-44)">大水牛测绘</text>
<text transform="translate(743.2 800.4) rotate(-44)">大水牛测绘</text>
</g>
</svg>
<!-- cursor -->
<svg class="abs" style="left:528.5px;top:543px" width="14" height="20" viewBox="0 0 14 20"><path d="M1 1v15l3.500-3.500 2.500 6 2.500-1-2.500-6h5z" fill="#fff" stroke="#222" stroke-width="1"/></svg>
</body></html>
